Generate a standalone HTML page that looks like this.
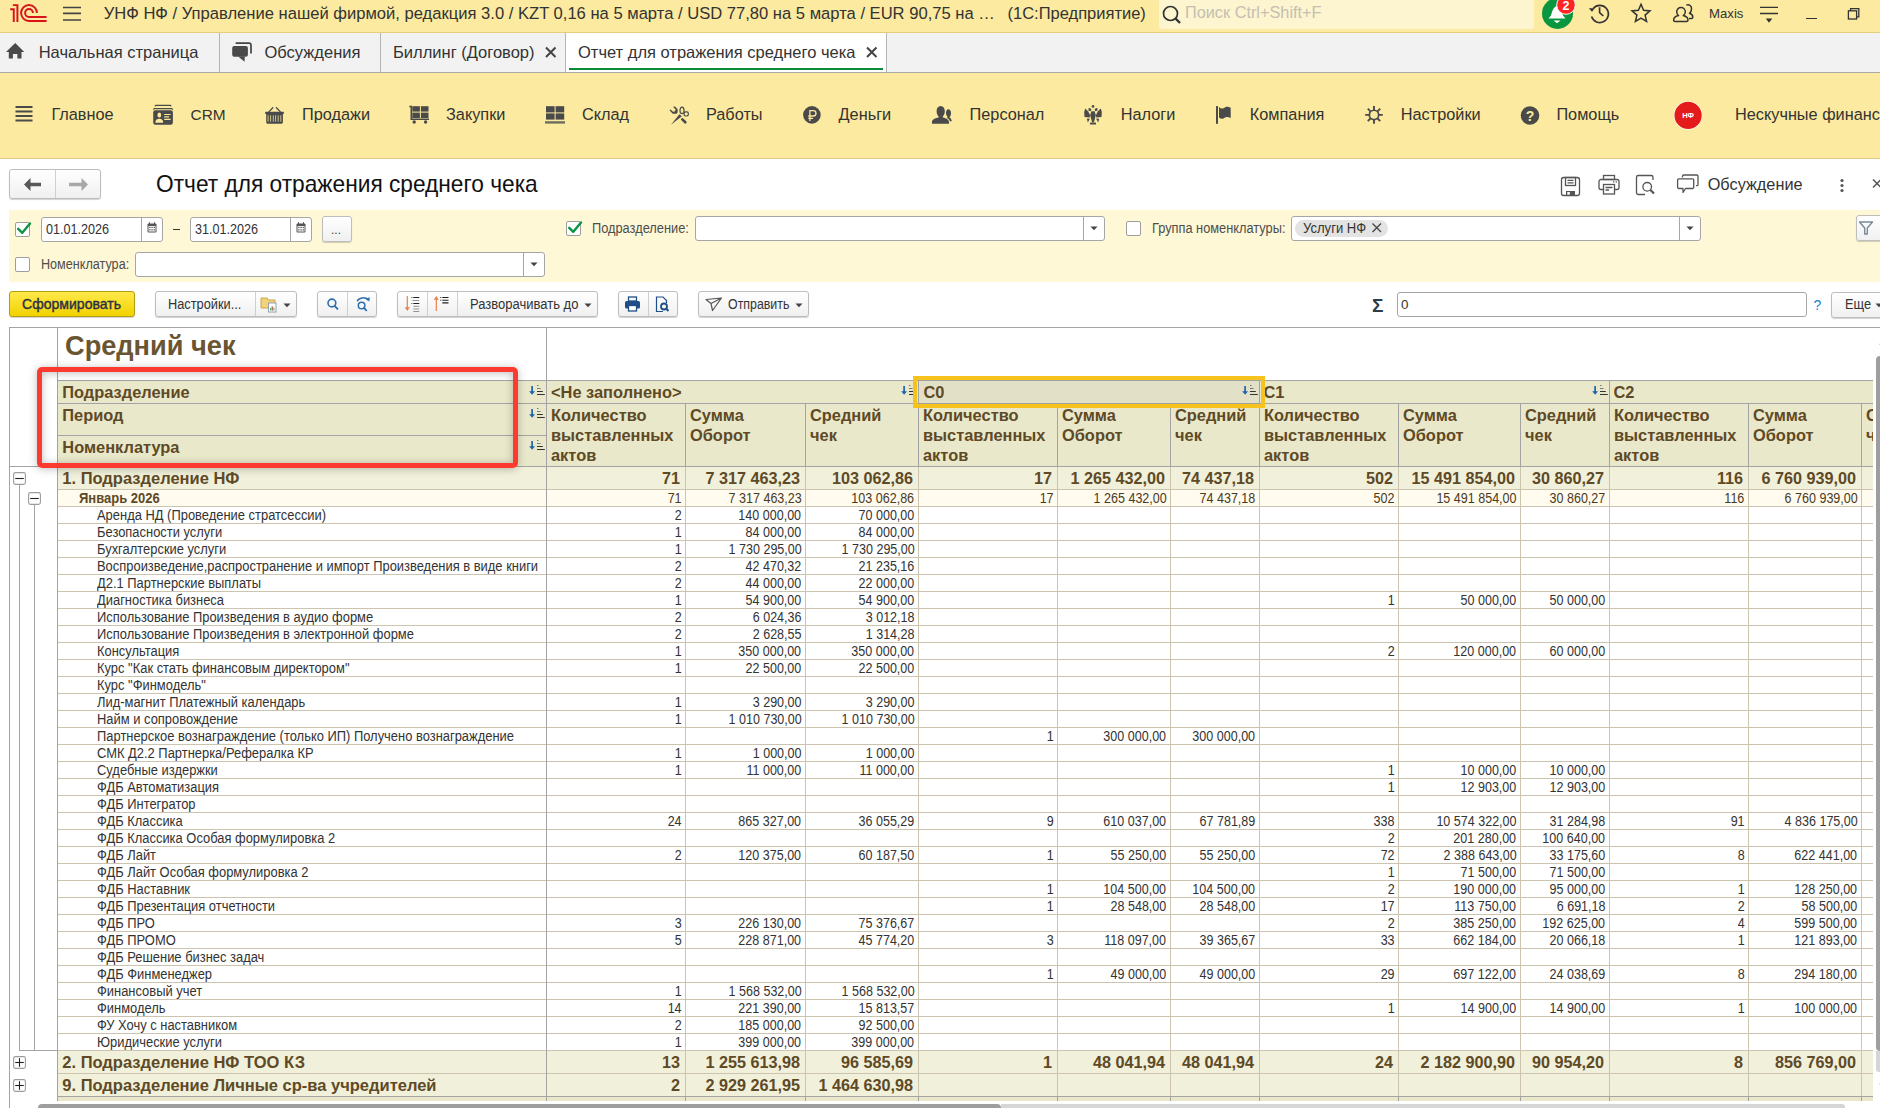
<!DOCTYPE html>
<html><head><meta charset="utf-8"><title>1C</title>
<style>
html,body{margin:0;padding:0;width:1880px;height:1108px;overflow:hidden;background:#fff;}
body{position:relative;font-family:"Liberation Sans",sans-serif;}
.a{position:absolute;box-sizing:border-box;}
.t{position:absolute;white-space:nowrap;font-family:"Liberation Sans",sans-serif;}
svg.a{overflow:visible;}
</style></head><body>
<div class="a" style="left:0px;top:0px;width:1880px;height:32px;background:#FBEA9F;"></div>
<div class="a" style="left:0px;top:32px;width:1880px;height:1px;background:#E3CF7A;"></div>
<svg class="a" style="left:0px;top:0px;" width="60" height="30" viewBox="0 0 60 30"><g fill="none" stroke="#D9121C" stroke-width="1.95"><path d="M10.2 9.2 H13.75 V21.9"/><path d="M12.9 5.1 H17.4 V21.9"/><path d="M36.9 13 A7.9 7.9 0 1 0 29 20.9 H46.6"/><path d="M32.9 13 A3.9 3.9 0 1 0 29 16.9 H46.6"/></g></svg>
<svg class="a" style="left:60px;top:0px;" width="30" height="30" viewBox="0 0 30 30"><g stroke="#444" stroke-width="1.6"><path d="M3 7.5H21M3 13.4H21M3 20H21"/></g></svg>
<div class="t " style="left:103.7px;top:6px;font-size:16.58px;line-height:16.58px;font-weight:400;color:#333;">УНФ НФ / Управление нашей фирмой, редакция 3.0 / KZT 0,16 на 5 марта / USD 77,80 на 5 марта / EUR 90,75 на …</div>
<div class="t " style="left:1007.5px;top:5px;font-size:16.5px;line-height:16.5px;font-weight:400;color:#333;">(1С:Предприятие)</div>
<div class="a" style="left:1159px;top:0px;width:375px;height:29px;background:#FDF5D0;border-radius:0 0 3px 3px;"></div>
<svg class="a" style="left:1160px;top:3px;" width="24" height="24" viewBox="0 0 24 24"><g fill="none" stroke="#333" stroke-width="1.7"><circle cx="10.5" cy="10.5" r="7"/><path d="M15.5 15.5 L20 20" stroke-width="2.4"/></g></svg>
<div class="t " style="left:1185px;top:4px;font-size:16.3px;line-height:16.3px;font-weight:400;color:#C4C0B0;">Поиск Ctrl+Shift+F</div>
<svg class="a" style="left:1536px;top:0px;" width="44" height="32" viewBox="0 0 44 32"><circle cx="21.5" cy="13.4" r="15.5" fill="#08963F"/><path d="M21 6 C17 7 16 12 15 15.5 L12.5 18.5 H29.5 L27 15.5 C26 12 25 7 21 6Z" fill="#fff"/><path d="M17.5 20.5 H24.5 L21 23.2Z" fill="#fff"/><circle cx="30" cy="5" r="9.3" fill="#FF2222" stroke="#fff" stroke-width="1"/><text x="30" y="10" font-family="Liberation Sans" font-size="12.5" font-weight="700" fill="#fff" text-anchor="middle">2</text></svg>
<svg class="a" style="left:1586px;top:-1.2px;" width="28" height="32" viewBox="0 0 28 32"><g fill="none" stroke="#333" stroke-width="1.6"><path d="M7.2 9.5 A8.6 8.6 0 1 1 5.6 17.5"/><path d="M13.6 8.2 V13.6 L17.3 17"/></g><path d="M2.8 9.3 L8.8 9.3 L6 12.8Z" fill="#333"/></svg>
<svg class="a" style="left:1628px;top:0px;" width="26" height="32" viewBox="0 0 26 32"><path d="M13 4.3 L15.6 10.3 L22 10.9 L17.1 15.1 L18.6 21.5 L13 18.2 L7.4 21.5 L8.9 15.1 L4 10.9 L10.4 10.3Z" fill="none" stroke="#333" stroke-width="1.5" stroke-linejoin="miter"/></svg>
<svg class="a" style="left:1670px;top:0px;" width="28" height="32" viewBox="0 0 28 32"><g fill="none" stroke="#333" stroke-width="1.5" stroke-linejoin="round"><path d="M16.3 5.2 A3.6 3.6 0 0 1 21.5 9 C21.5 11.3 20.5 12.5 19.5 13.3 C21.5 14 22.8 15.3 22.8 17.2 C22.8 18 22.3 18.5 21.5 18.5 H19"/><path d="M11 7.5 A4.3 4.3 0 0 1 15.3 11.8 C15.3 13.8 14.3 15 13.2 15.6 C16 16.3 18 17.6 18 20 C18 21 17.4 21.5 16.5 21.5 H5 C4.1 21.5 3.6 21 3.6 20 C3.6 17.6 5.6 16.3 8.6 15.6 C7.5 15 6.7 13.8 6.7 11.8 A4.3 4.3 0 0 1 11 7.5Z"/></g></svg>
<div class="t " style="left:1709px;top:7px;font-size:13.2px;line-height:13.2px;font-weight:400;color:#333;">Maxis</div>
<svg class="a" style="left:1756px;top:0px;" width="26" height="32" viewBox="0 0 26 32"><g stroke="#333" stroke-width="1.3"><path d="M4 7.3H22M4 13.5H22"/></g><path d="M9.8 18.6 H16.3 L13 22.8Z" fill="#333"/></svg>
<div class="a" style="left:1806px;top:17.5px;width:11px;height:1.3px;background:#333;"></div>
<svg class="a" style="left:1844px;top:4px;" width="20" height="20" viewBox="0 0 20 20"><g fill="none" stroke="#333" stroke-width="1.3"><rect x="4.4" y="6.8" width="8.2" height="8.2"/><path d="M6.6 6.8 V4.6 H14.8 V12.8 H12.6"/></g></svg>
<div class="a" style="left:0px;top:33px;width:1880px;height:39px;background:#F2F2F2;"></div>
<div class="a" style="left:0px;top:72px;width:1880px;height:1px;background:#A9A9A9;"></div>
<div class="a" style="left:219px;top:33px;width:1px;height:39px;background:#B5B5B5;"></div>
<div class="a" style="left:380px;top:33px;width:1px;height:39px;background:#B5B5B5;"></div>
<div class="a" style="left:565px;top:33px;width:321px;height:39px;background:#fff;"></div>
<div class="a" style="left:565px;top:33px;width:1px;height:39px;background:#B5B5B5;"></div>
<div class="a" style="left:886px;top:33px;width:1px;height:39px;background:#B5B5B5;"></div>
<div class="a" style="left:569px;top:68px;width:314px;height:2px;background:#0B8A3A;"></div>
<svg class="a" style="left:0px;top:36px;" width="30" height="30" viewBox="0 0 30 30"><path d="M15.2 7 L6 16 H8.8 V22.5 H12.9 V18 H17.4 V22.5 H21.5 V16 H24.3Z" fill="#4A4A4A"/></svg>
<div class="t " style="left:38.7px;top:44px;font-size:16.5px;line-height:16.5px;font-weight:400;color:#333;">Начальная страница</div>
<svg class="a" style="left:226px;top:36px;" width="32" height="30" viewBox="0 0 32 30"><path d="M10.3 7.1 H23.3 A1.8 1.8 0 0 1 25 8.9 V16.8" fill="none" stroke="#444" stroke-width="1.7" stroke-linecap="round"/><rect x="6.2" y="10" width="15.7" height="10.8" rx="2" fill="#4A4A4A"/><path d="M12.2 20.5 L18.6 25.7 L18.7 20.5Z" fill="#4A4A4A"/></svg>
<div class="t " style="left:264.5px;top:44px;font-size:16.5px;line-height:16.5px;font-weight:400;color:#333;">Обсуждения</div>
<div class="t " style="left:393px;top:44px;font-size:16.5px;line-height:16.5px;font-weight:400;color:#333;">Биллинг (Договор)</div>
<svg class="a" style="left:544px;top:45px;" width="14" height="14" viewBox="0 0 14 14"><path d="M2 2.5 L11.5 12 M11.5 2.5 L2 12" stroke="#444" stroke-width="2"/></svg>
<div class="t " style="left:578px;top:44px;font-size:16.5px;line-height:16.5px;font-weight:400;color:#333;">Отчет для отражения среднего чека</div>
<svg class="a" style="left:865px;top:45px;" width="14" height="14" viewBox="0 0 14 14"><path d="M2 2.5 L11.5 12 M11.5 2.5 L2 12" stroke="#444" stroke-width="2"/></svg>
<div class="a" style="left:0px;top:73px;width:1880px;height:85px;background:#FBEA9F;"></div>
<div class="a" style="left:0px;top:158px;width:1880px;height:1px;background:#DCCB86;"></div>
<svg class="a" style="left:15px;top:105px;" width="20" height="20" viewBox="0 0 20 20"><g stroke="#4A4A4A" stroke-width="2.2"><path d="M0.5 2H17.5M0.5 6.5H17.5M0.5 11H17.5M0.5 15.5H17.5"/></g></svg>
<div class="t " style="left:51.4px;top:106px;font-size:16.3px;line-height:16.3px;font-weight:400;color:#333;">Главное</div>
<svg class="a" style="left:145px;top:98px;" width="34" height="32" viewBox="0 0 34 32"><rect x="8.2" y="12.3" width="19.7" height="14.4" rx="2.2" fill="#4A4A4A"/><path d="M9.8 8.2 L10.8 7.4 H25.3 L26.3 8.2" fill="none" stroke="#4A4A4A" stroke-width="1.1"/><path d="M8.3 11.6 L9.3 10.6 H26.8 L27.8 11.6" fill="none" stroke="#4A4A4A" stroke-width="1.1"/><ellipse cx="14.3" cy="16.9" rx="1.9" ry="2.5" fill="#FBEA9F"/><path d="M10.3 24.8 C10.5 21.5 12.5 20.8 14.3 20.8 C16.1 20.8 18.1 21.5 18.2 24.8Z" fill="#FBEA9F"/><path d="M19.2 16.5H25.6M19.2 18.9H24M19.2 21.4H25.6" stroke="#FBEA9F" stroke-width="1.1"/></svg>
<div class="t " style="left:190.6px;top:107px;font-size:15.4px;line-height:15.4px;font-weight:400;color:#333;">CRM</div>
<svg class="a" style="left:258px;top:98px;" width="34" height="32" viewBox="0 0 34 32"><path d="M14.8 9.8 L11 13.6 M18.4 9.8 L22.2 13.6" stroke="#4A4A4A" stroke-width="1.3" stroke-linecap="round"/><rect x="7.1" y="13.8" width="18.8" height="2.2" rx="0.8" fill="#4A4A4A"/><path d="M8.2 15.9 H24.9 V24.3 A1.4 1.4 0 0 1 23.5 25.7 H9.6 A1.4 1.4 0 0 1 8.2 24.3Z" fill="#4A4A4A"/><path d="M10.1 17.3V23.7M12.6 17.3V23.7M15.3 17.3V23.7M17.6 17.3V23.7M20.2 17.3V23.7M22.8 17.3V23.7" stroke="#CFC48A" stroke-width="1"/></svg>
<div class="t " style="left:302px;top:106px;font-size:16.3px;line-height:16.3px;font-weight:400;color:#333;">Продажи</div>
<svg class="a" style="left:400px;top:100px;" width="32" height="28" viewBox="0 0 32 28"><path d="M9.3 6.5 H11.3 V19.2 H29" fill="none" stroke="#4A4A4A" stroke-width="1.6"/><g fill="#4A4A4A"><rect x="12.3" y="6.2" width="7.6" height="5.4"/><rect x="20.9" y="6.2" width="7.6" height="5.4"/><rect x="12.3" y="12.6" width="7.6" height="5.4"/><rect x="20.9" y="12.6" width="7.6" height="5.4"/><circle cx="14.2" cy="22" r="1.7"/><circle cx="25.6" cy="22" r="1.7"/></g></svg>
<div class="t " style="left:446px;top:106px;font-size:16.3px;line-height:16.3px;font-weight:400;color:#333;">Закупки</div>
<svg class="a" style="left:540px;top:100px;" width="30" height="28" viewBox="0 0 30 28"><g fill="#4A4A4A"><rect x="6" y="6.2" width="8.6" height="6.2"/><rect x="15.6" y="6.2" width="8.6" height="6.2"/><rect x="6" y="13.4" width="8.6" height="6.2"/><rect x="15.6" y="13.4" width="8.6" height="6.2"/></g><rect x="5" y="21.2" width="20" height="2.4" fill="#6E6E5E"/></svg>
<div class="t " style="left:582px;top:106px;font-size:16.3px;line-height:16.3px;font-weight:400;color:#333;">Склад</div>
<svg class="a" style="left:660px;top:100px;" width="32" height="30" viewBox="0 0 32 30"><path d="M9.5 10.3 L12.7 13.7 H16.5 L17.6 12.6 V9.3 L15 6.4 L13 6.8 L15.6 9.6 L14.8 11.5 L13 11.7 L10.6 9.5Z" fill="#4A4A4A"/><path d="M11 24.8 L19.4 14.3 L21.8 16.3Z" fill="#4A4A4A"/><path d="M22.3 19.4 L25.3 22.3" stroke="#4A4A4A" stroke-width="2.6" stroke-linecap="round"/><ellipse cx="22" cy="10.4" rx="2" ry="3.2" fill="none" stroke="#4A4A4A" stroke-width="1.2"/><rect x="24.1" y="11.8" width="4.2" height="4.2" rx="1.4" fill="none" stroke="#4A4A4A" stroke-width="1.2"/></svg>
<div class="t " style="left:706px;top:106px;font-size:16.3px;line-height:16.3px;font-weight:400;color:#333;">Работы</div>
<svg class="a" style="left:795px;top:100px;" width="32" height="30" viewBox="0 0 32 30"><circle cx="16.9" cy="14.9" r="8.8" fill="#4A4A4A"/><path d="M14.9 21.1 V10.6 H18.3 A2.7 2.7 0 0 1 18.3 16 H13.3 M13.3 18.4 H18" fill="none" stroke="#FBEA9F" stroke-width="1.3"/></svg>
<div class="t " style="left:838.6px;top:106px;font-size:16.3px;line-height:16.3px;font-weight:400;color:#333;">Деньги</div>
<svg class="a" style="left:925px;top:100px;" width="32" height="30" viewBox="0 0 32 30"><path d="M23.3 9.3 C25 9.3 26 11 26 13.2 C26 15 25.3 16.5 24.3 17.3 C25.5 17.8 26.5 19.3 26.8 21 L25 21.5 C24.5 19.8 23.4 18.6 22 18 L22.5 16.5 C21.5 15.8 21 14.5 21 13.2 C21 11 21.8 9.3 23.3 9.3Z" fill="#4A4A4A"/><path d="M15.7 6 C18.2 6 19.8 8.2 19.8 11.2 C19.8 13.6 18.9 15.3 17.8 16.6 V17.5 C21.5 18.2 24 19.6 24 22.2 V23.8 H7 V22.2 C7 19.6 9.6 18.2 13.6 17.5 V16.6 C12.5 15.3 11.6 13.6 11.6 11.2 C11.6 8.2 13.2 6 15.7 6Z" fill="#4A4A4A" stroke="#FBEA9F" stroke-width="0"/></svg>
<div class="t " style="left:969.6px;top:106px;font-size:16.3px;line-height:16.3px;font-weight:400;color:#333;">Персонал</div>
<svg class="a" style="left:1075px;top:100px;" width="32" height="30" viewBox="0 0 32 30"><g fill="#4A4A4A"><circle cx="18" cy="6.4" r="1.3"/><path d="M13.8 7.8 L16.4 8.9 L15.8 11.2 L13.4 10.6Z"/><path d="M22.2 7.8 L19.6 8.9 L20.2 11.2 L22.6 10.6Z"/><path d="M10.2 8.4 L13.3 11.6 L15.2 15.4 L14.6 17.6 L9.5 16.9 L9.2 12Z"/><path d="M25.8 8.4 L22.7 11.6 L20.8 15.4 L21.4 17.6 L26.5 16.9 L26.8 12Z"/><path d="M16.4 11.3 H19.6 L20.8 15 L19.7 19.6 L18.9 22.2 H17.1 L16.3 19.6 L15.2 15Z"/><path d="M11.8 18.8 L14.9 18.4 L12.9 22.6Z"/><path d="M24.2 18.8 L21.1 18.4 L23.1 22.6Z"/><path d="M15.2 22.4 H20.8 L21.1 24.4 H14.9Z"/></g></svg>
<div class="t " style="left:1120.8px;top:106px;font-size:16.3px;line-height:16.3px;font-weight:400;color:#333;">Налоги</div>
<svg class="a" style="left:1205px;top:100px;" width="32" height="30" viewBox="0 0 32 30"><rect x="11" y="6.1" width="2" height="17.7" fill="#4A4A4A"/><path d="M14 7 C15.5 8.5 17 9 18.5 8.2 C20.5 6.8 22 5.8 25.7 7.8 V18 C22 16.3 20.5 17.3 18.5 18.5 C17 19.2 15.5 18.8 14 17.4Z" fill="#4A4A4A"/></svg>
<div class="t " style="left:1249.8px;top:106px;font-size:16.3px;line-height:16.3px;font-weight:400;color:#333;">Компания</div>
<svg class="a" style="left:1355px;top:100px;" width="32" height="30" viewBox="0 0 32 30"><g transform="translate(19 14.9)"><circle r="4.65" fill="none" stroke="#4A4A4A" stroke-width="1.7"/><g stroke="#4A4A4A" stroke-width="1.9"><path d="M0 -8.8V-5M0 5V8.8M-8.8 0H-5M5 0H8.8M-6.2 -6.2L-3.6 -3.6M3.6 3.6L6.2 6.2M-6.2 6.2L-3.6 3.6M3.6 -3.6L6.2 -6.2"/></g></g></svg>
<div class="t " style="left:1400.8px;top:106px;font-size:16.3px;line-height:16.3px;font-weight:400;color:#333;">Настройки</div>
<svg class="a" style="left:1519px;top:104px;" width="22" height="22" viewBox="0 0 22 22"><circle cx="11" cy="11.5" r="9.3" fill="#4A4A4A"/><text x="11" y="16.8" font-family="Liberation Sans" font-size="14" font-weight="700" fill="#FBEA9F" text-anchor="middle">?</text></svg>
<div class="t " style="left:1556.4px;top:106px;font-size:16.3px;line-height:16.3px;font-weight:400;color:#333;">Помощь</div>
<svg class="a" style="left:1665px;top:98px;" width="50" height="35" viewBox="0 0 50 35"><circle cx="23.1" cy="17.4" r="14.2" fill="#fff"/><circle cx="23.1" cy="17.4" r="13.6" fill="#E31B1B"/><text x="23.1" y="20.2" font-family="Liberation Sans" font-size="7.5" font-weight="700" fill="#fff" text-anchor="middle">НФ</text></svg>
<div class="t " style="left:1735px;top:106px;font-size:16.3px;line-height:16.3px;font-weight:400;color:#333;">Нескучные финансы</div>
<div class="a" style="left:9px;top:169px;width:92px;height:30px;background:linear-gradient(#FFFFFF,#F0F0F0);border:1px solid #BDBDBD;border-radius:3px;box-shadow:0 1px 1px rgba(0,0,0,0.18);"></div>
<div class="a" style="left:55px;top:170px;width:1px;height:28px;background:#D0D0D0;"></div>
<svg class="a" style="left:20px;top:172px;" width="26" height="24" viewBox="0 0 26 24"><path d="M4 12.5 L10.5 6 V10.8 H21 V14.2 H10.5 V19Z" fill="#585858"/></svg>
<svg class="a" style="left:66px;top:172px;" width="26" height="24" viewBox="0 0 26 24"><path d="M22 12.5 L15.5 6 V10.8 H3 V14.2 H15.5 V19Z" fill="#A8A8A8"/></svg>
<div class="t " style="left:156.4px;top:172px;font-size:24px;line-height:24px;font-weight:400;color:#111;transform:scaleX(0.946);transform-origin:0 0;">Отчет для отражения среднего чека</div>
<svg class="a" style="left:1558px;top:172px;" width="26" height="26" viewBox="0 0 26 26"><g fill="none" stroke="#555" stroke-width="1.3"><rect x="3.5" y="5.5" width="18" height="18" rx="2.2"/><rect x="7.5" y="5.5" width="10" height="8"/><path d="M9.5 8.3H15.5M9.5 10.8H15.5"/></g><rect x="8" y="19" width="9" height="4.5" fill="#555"/><rect x="9.3" y="20" width="2.5" height="2.7" fill="#fff"/></svg>
<svg class="a" style="left:1596px;top:172px;" width="26" height="26" viewBox="0 0 26 26"><g fill="none" stroke="#555" stroke-width="1.3"><rect x="7.5" y="3.5" width="11" height="4"/><path d="M7 17.5 H5 A2 2 0 0 1 3 15.5 V9.5 A2 2 0 0 1 5 7.5 H21 A2 2 0 0 1 23 9.5 V15.5 A2 2 0 0 1 21 17.5 H19"/><rect x="7.5" y="12.5" width="11" height="9.5"/><path d="M9.5 15.5H16.5M9.5 18H13"/></g><path d="M17 9.8H18.3M19.6 9.8H21" stroke="#555" stroke-width="1.2"/></svg>
<svg class="a" style="left:1633px;top:172px;" width="26" height="26" viewBox="0 0 26 26"><g fill="none" stroke="#555" stroke-width="1.3"><path d="M12 22.5 H5.3 A1.8 1.8 0 0 1 3.5 20.7 V5.3 A1.8 1.8 0 0 1 5.3 3.5 H18.2 A1.8 1.8 0 0 1 20 5.3 V8"/><circle cx="14.2" cy="14.8" r="4.3"/></g><path d="M17.5 18 L21 21.5" stroke="#555" stroke-width="2.2"/></svg>
<svg class="a" style="left:1675px;top:172px;" width="28" height="26" viewBox="0 0 28 26"><g fill="none" stroke="#555" stroke-width="1.3" stroke-linejoin="round"><path d="M7.5 5.5 V4.2 A1.2 1.2 0 0 1 8.7 3 H21.8 A1.2 1.2 0 0 1 23 4.2 V12.5 A1.2 1.2 0 0 1 21.8 13.7 H21"/><path d="M3.8 6.8 H17.5 A1.2 1.2 0 0 1 18.7 8 V15.3 A1.2 1.2 0 0 1 17.5 16.5 H10.5 L8 20.5 V16.5 H3.8 A1.2 1.2 0 0 1 2.6 15.3 V8 A1.2 1.2 0 0 1 3.8 6.8Z"/></g></svg>
<div class="t " style="left:1707.7px;top:176px;font-size:16.3px;line-height:16.3px;font-weight:400;color:#333;">Обсуждение</div>
<svg class="a" style="left:1836px;top:172px;" width="12" height="26" viewBox="0 0 12 26"><circle cx="6" cy="8.5" r="1.6" fill="#555"/><circle cx="6" cy="13.5" r="1.6" fill="#555"/><circle cx="6" cy="18.5" r="1.6" fill="#555"/></svg>
<svg class="a" style="left:1868px;top:176px;" width="14" height="16" viewBox="0 0 14 16"><path d="M5 3.5 L13 11.5 M13 3.5 L5 11.5" stroke="#555" stroke-width="1.5"/></svg>
<div class="a" style="left:9px;top:210px;width:1871px;height:72px;background:#FFF8D7;"></div>
<div class="a" style="left:15px;top:222px;width:15px;height:15px;background:#fff;border:1px solid #9E9E9E;border-radius:2px;"></div>
<svg class="a" style="left:15px;top:220px;" width="18" height="18" viewBox="0 0 18 18"><path d="M3.2 8.8 L7.3 12.8 L15 3.5" fill="none" stroke="#0B9444" stroke-width="2.4" stroke-linecap="round" stroke-linejoin="round"/></svg>
<div class="a" style="left:41px;top:217px;width:122px;height:25px;background:#fff;border:1px solid #A6A6A6;border-radius:3px;"></div>
<div class="a" style="left:141px;top:218px;width:1px;height:23px;background:#A6A6A6;"></div>
<svg class="a" style="left:147px;top:222px;" width="10" height="11" viewBox="0 0 10 11"><rect x="0.5" y="1.5" width="9" height="9" rx="1" fill="#555"/><rect x="1.5" y="4" width="7" height="5.5" fill="#fff"/><path d="M2.5 0.2V2.3M7.5 0.2V2.3" stroke="#555" stroke-width="1"/><g fill="#555"><rect x="2.2" y="4.8" width="1.3" height="1.3"/><rect x="4.4" y="4.8" width="1.3" height="1.3"/><rect x="6.6" y="4.8" width="1.3" height="1.3"/><rect x="2.2" y="7.2" width="1.3" height="1.3"/><rect x="4.4" y="7.2" width="1.3" height="1.3"/><rect x="6.6" y="7.2" width="1.3" height="1.3"/></g></svg>
<div class="t " style="left:45.7px;top:222px;font-size:14px;line-height:14px;font-weight:400;color:#333;transform:scaleX(0.9);transform-origin:0 0;">01.01.2026</div>
<div class="a" style="left:173px;top:229px;width:7px;height:1.3px;background:#333;"></div>
<div class="a" style="left:190px;top:217px;width:122px;height:25px;background:#fff;border:1px solid #A6A6A6;border-radius:3px;"></div>
<div class="a" style="left:290px;top:218px;width:1px;height:23px;background:#A6A6A6;"></div>
<svg class="a" style="left:296px;top:222px;" width="10" height="11" viewBox="0 0 10 11"><rect x="0.5" y="1.5" width="9" height="9" rx="1" fill="#555"/><rect x="1.5" y="4" width="7" height="5.5" fill="#fff"/><path d="M2.5 0.2V2.3M7.5 0.2V2.3" stroke="#555" stroke-width="1"/><g fill="#555"><rect x="2.2" y="4.8" width="1.3" height="1.3"/><rect x="4.4" y="4.8" width="1.3" height="1.3"/><rect x="6.6" y="4.8" width="1.3" height="1.3"/><rect x="2.2" y="7.2" width="1.3" height="1.3"/><rect x="4.4" y="7.2" width="1.3" height="1.3"/><rect x="6.6" y="7.2" width="1.3" height="1.3"/></g></svg>
<div class="t " style="left:194.5px;top:222px;font-size:14px;line-height:14px;font-weight:400;color:#333;transform:scaleX(0.9);transform-origin:0 0;">31.01.2026</div>
<div class="a" style="left:322px;top:216px;width:30px;height:26px;background:linear-gradient(#FFFFFF,#F0F0F0);border:1px solid #BDBDBD;border-radius:3px;box-shadow:0 1px 1px rgba(0,0,0,0.18);"></div>
<div class="t " style="left:331px;top:224px;font-size:12px;line-height:12px;font-weight:400;color:#444;">...</div>
<div class="a" style="left:566px;top:221px;width:15px;height:15px;background:#fff;border:1px solid #9E9E9E;border-radius:2px;"></div>
<svg class="a" style="left:566px;top:219px;" width="18" height="18" viewBox="0 0 18 18"><path d="M3.2 8.8 L7.3 12.8 L15 3.5" fill="none" stroke="#0B9444" stroke-width="2.4" stroke-linecap="round" stroke-linejoin="round"/></svg>
<div class="t " style="left:592.4px;top:221px;font-size:14px;line-height:14px;font-weight:400;color:#4D4D4D;transform:scaleX(0.914);transform-origin:0 0;">Подразделение:</div>
<div class="a" style="left:695px;top:216px;width:410px;height:25px;background:#fff;border:1px solid #A6A6A6;border-radius:3px;"></div>
<div class="a" style="left:1083px;top:217px;width:1px;height:23px;background:#A6A6A6;"></div>
<svg class="a" style="left:1090px;top:226px;" width="8" height="5" viewBox="0 0 8 5"><path d="M0.5 0.5 H7.5 L4 4.2Z" fill="#444"/></svg>
<div class="a" style="left:1126px;top:221px;width:15px;height:15px;background:#fff;border:1px solid #9E9E9E;border-radius:2px;"></div>
<div class="t " style="left:1152px;top:221px;font-size:14px;line-height:14px;font-weight:400;color:#4D4D4D;transform:scaleX(0.914);transform-origin:0 0;">Группа номенклатуры:</div>
<div class="a" style="left:1291px;top:216px;width:410px;height:25px;background:#fff;border:1px solid #A6A6A6;border-radius:3px;"></div>
<div class="a" style="left:1679px;top:217px;width:1px;height:23px;background:#A6A6A6;"></div>
<svg class="a" style="left:1686px;top:226px;" width="8" height="5" viewBox="0 0 8 5"><path d="M0.5 0.5 H7.5 L4 4.2Z" fill="#444"/></svg>
<div class="a" style="left:1295px;top:220px;width:93px;height:17px;background:#E3E3E3;border-radius:8.5px;"></div>
<div class="t " style="left:1302.8px;top:221px;font-size:14px;line-height:14px;font-weight:400;color:#333;transform:scaleX(0.934);transform-origin:0 0;">Услуги НФ</div>
<svg class="a" style="left:1371px;top:222px;" width="12" height="12" viewBox="0 0 12 12"><path d="M1.5 1.5 L10 10 M10 1.5 L1.5 10" stroke="#444" stroke-width="1.3"/></svg>
<div class="a" style="left:1856px;top:215px;width:30px;height:26px;background:linear-gradient(#FFFFFF,#F0F0F0);border:1px solid #BDBDBD;border-radius:3px;box-shadow:0 1px 1px rgba(0,0,0,0.18);"></div>
<svg class="a" style="left:1857px;top:219px;" width="20" height="18" viewBox="0 0 20 18"><path d="M2.5 3 H15.5 L10.3 9 V15 H7.7 V9Z" fill="none" stroke="#7A8A99" stroke-width="1.4" stroke-linejoin="round"/></svg>
<div class="a" style="left:15px;top:257px;width:15px;height:15px;background:#fff;border:1px solid #9E9E9E;border-radius:2px;"></div>
<div class="t " style="left:41.2px;top:257px;font-size:14px;line-height:14px;font-weight:400;color:#4D4D4D;transform:scaleX(0.901);transform-origin:0 0;">Номенклатура:</div>
<div class="a" style="left:135px;top:252px;width:410px;height:25px;background:#fff;border:1px solid #A6A6A6;border-radius:3px;"></div>
<div class="a" style="left:523px;top:253px;width:1px;height:23px;background:#A6A6A6;"></div>
<svg class="a" style="left:530px;top:262px;" width="8" height="5" viewBox="0 0 8 5"><path d="M0.5 0.5 H7.5 L4 4.2Z" fill="#444"/></svg>
<div class="a" style="left:9px;top:291px;width:126px;height:26px;background:linear-gradient(#FFE94A,#F2D200);border:1px solid #B39E12;border-radius:3px;box-shadow:0 1px 1px rgba(0,0,0,0.18);"></div>
<div class="t " style="left:22.3px;top:297px;font-size:14.5px;line-height:14.5px;font-weight:400;color:#2A2F45;transform:scaleX(0.969);transform-origin:0 0;-webkit-text-stroke:0.4px #2A2F45;">Сформировать</div>
<div class="a" style="left:155px;top:291px;width:142px;height:26px;background:linear-gradient(#FFFFFF,#F0F0F0);border:1px solid #BDBDBD;border-radius:3px;box-shadow:0 1px 1px rgba(0,0,0,0.18);"></div>
<div class="a" style="left:255px;top:292px;width:1px;height:24px;background:#CFCFCF;"></div>
<div class="t " style="left:168px;top:297px;font-size:14px;line-height:14px;font-weight:400;color:#333;transform:scaleX(0.914);transform-origin:0 0;">Настройки...</div>
<svg class="a" style="left:259px;top:294px;" width="22" height="20" viewBox="0 0 22 20"><path d="M2 4 H8 L9.5 6 H16 V14 H2Z" fill="#F2D27A" stroke="#C8A040" stroke-width="0.9"/><rect x="9.5" y="9" width="7.5" height="9" fill="#fff" stroke="#8899AA" stroke-width="0.9"/><path d="M11.5 16.5V14M13.2 16.5V12.5M14.9 16.5V13.5" stroke="#3CA050" stroke-width="0.9"/><path d="M13.2 16.5V12.5" stroke="#D04040" stroke-width="0.9"/></svg>
<svg class="a" style="left:283px;top:303px;" width="8" height="5" viewBox="0 0 8 5"><path d="M0.5 0.5 H7.5 L4 4.2Z" fill="#444"/></svg>
<div class="a" style="left:317px;top:291px;width:60px;height:26px;background:linear-gradient(#FFFFFF,#F0F0F0);border:1px solid #BDBDBD;border-radius:3px;box-shadow:0 1px 1px rgba(0,0,0,0.18);"></div>
<div class="a" style="left:347px;top:292px;width:1px;height:24px;background:#CFCFCF;"></div>
<svg class="a" style="left:322px;top:294px;" width="22" height="20" viewBox="0 0 22 20"><circle cx="9.9" cy="9" r="3.9" fill="none" stroke="#2F6EAD" stroke-width="1.6"/><path d="M12.6 11.8 L15.5 14.8" stroke="#2F6EAD" stroke-width="1.9" stroke-linecap="round"/></svg>
<svg class="a" style="left:352px;top:294px;" width="22" height="20" viewBox="0 0 22 20"><path d="M5.2 7.2 C6.5 3.5 13.5 2.5 16 6" fill="none" stroke="#2F6EAD" stroke-width="1.5"/><path d="M13.6 4.8 L17.8 3.2 L17.3 7.6Z" fill="#2F6EAD"/><circle cx="9.6" cy="11.5" r="3.3" fill="none" stroke="#2F6EAD" stroke-width="1.5"/><path d="M11.9 13.8 L14.3 16.3" stroke="#2F6EAD" stroke-width="1.8" stroke-linecap="round"/></svg>
<div class="a" style="left:397px;top:291px;width:201px;height:26px;background:linear-gradient(#FFFFFF,#F0F0F0);border:1px solid #BDBDBD;border-radius:3px;box-shadow:0 1px 1px rgba(0,0,0,0.18);"></div>
<div class="a" style="left:427px;top:292px;width:1px;height:24px;background:#CFCFCF;"></div>
<div class="a" style="left:457px;top:292px;width:1px;height:24px;background:#CFCFCF;"></div>
<svg class="a" style="left:401px;top:294px;" width="24" height="20" viewBox="0 0 24 20"><path d="M6.3 2 V15" stroke="#E9804A" stroke-width="1.2"/><path d="M3.8 13.3 L6.3 17 L8.8 13.3Z" fill="#E9804A"/><g stroke="#222" stroke-width="1"><path d="M10.5 3.5H11.3M12.3 3.5H18.3M10.5 9.5H11.3M12.3 9.5H18.3"/></g><g stroke="#888" stroke-width="0.9"><path d="M11.5 6.5H18.3M12.3 12.3H18.3M12.3 15H18.3M12.3 17.5H18.3"/></g></svg>
<svg class="a" style="left:431px;top:294px;" width="24" height="20" viewBox="0 0 24 20"><path d="M5.3 4 V17" stroke="#E9804A" stroke-width="1.2"/><path d="M2.8 5.7 L5.3 2 L7.8 5.7Z" fill="#E9804A"/><g stroke="#222" stroke-width="1.1"><path d="M9.3 3.5H10.3M11.3 3.5H17.5M9.3 6.2H10.3M11.3 6.2H17.5M11.3 8.9H17.5"/></g></svg>
<div class="t " style="left:469.6px;top:297px;font-size:14px;line-height:14px;font-weight:400;color:#333;transform:scaleX(0.929);transform-origin:0 0;">Разворачивать до</div>
<svg class="a" style="left:584px;top:303px;" width="8" height="5" viewBox="0 0 8 5"><path d="M0.5 0.5 H7.5 L4 4.2Z" fill="#444"/></svg>
<div class="a" style="left:618px;top:291px;width:60px;height:26px;background:linear-gradient(#FFFFFF,#F0F0F0);border:1px solid #BDBDBD;border-radius:3px;box-shadow:0 1px 1px rgba(0,0,0,0.18);"></div>
<div class="a" style="left:648px;top:292px;width:1px;height:24px;background:#CFCFCF;"></div>
<svg class="a" style="left:622px;top:294px;" width="22" height="20" viewBox="0 0 22 20"><rect x="6.5" y="3" width="8" height="4" fill="none" stroke="#1F4F86" stroke-width="1.3"/><rect x="3" y="7" width="15" height="7.5" rx="1.5" fill="#1F4F86"/><rect x="6.5" y="11.5" width="8" height="5.5" fill="#fff" stroke="#1F4F86" stroke-width="1.3"/></svg>
<svg class="a" style="left:652px;top:294px;" width="22" height="20" viewBox="0 0 22 20"><path d="M11 17.5 H4.5 V3 H11 L14.5 6.5 V9" fill="none" stroke="#1F4F86" stroke-width="1.2"/><circle cx="12" cy="12.5" r="3" fill="none" stroke="#1F4F86" stroke-width="1.8"/><path d="M14 14.5 L16.5 17" stroke="#1F4F86" stroke-width="2"/></svg>
<div class="a" style="left:698px;top:291px;width:111px;height:26px;background:linear-gradient(#FFFFFF,#F0F0F0);border:1px solid #BDBDBD;border-radius:3px;box-shadow:0 1px 1px rgba(0,0,0,0.18);"></div>
<svg class="a" style="left:703px;top:294px;" width="22" height="20" viewBox="0 0 22 20"><path d="M3 5.5 L18.5 4 L9.5 16.5 L8 9.5Z M8 9.5 L18.5 4" fill="none" stroke="#555" stroke-width="1.2" stroke-linejoin="round"/></svg>
<div class="t " style="left:728.2px;top:297px;font-size:14px;line-height:14px;font-weight:400;color:#333;transform:scaleX(0.884);transform-origin:0 0;">Отправить</div>
<svg class="a" style="left:795px;top:303px;" width="8" height="5" viewBox="0 0 8 5"><path d="M0.5 0.5 H7.5 L4 4.2Z" fill="#444"/></svg>
<div class="t " style="left:1372px;top:296px;font-size:19px;line-height:19px;font-weight:700;color:#2E3B4A;">Σ</div>
<div class="a" style="left:1397px;top:292px;width:410px;height:25px;background:#fff;border:1px solid #A6A6A6;border-radius:3px;"></div>
<div class="t " style="left:1401px;top:298px;font-size:13.4px;line-height:13.4px;font-weight:400;color:#333;">0</div>
<div class="t " style="left:1813.5px;top:298px;font-size:14px;line-height:14px;font-weight:400;color:#1C7FD0;">?</div>
<div class="a" style="left:1831px;top:292px;width:60px;height:26px;background:linear-gradient(#FFFFFF,#F0F0F0);border:1px solid #BDBDBD;border-radius:3px;box-shadow:0 1px 1px rgba(0,0,0,0.18);"></div>
<div class="t " style="left:1845px;top:297px;font-size:14px;line-height:14px;font-weight:400;color:#333;transform:scaleX(0.914);transform-origin:0 0;">Еще</div>
<svg class="a" style="left:1875px;top:303px;" width="8" height="5" viewBox="0 0 8 5"><path d="M0.5 0.5 H7.5 L4 4.2Z" fill="#444"/></svg>
<div class="a" style="left:0;top:0;width:1880px;height:1108px;clip-path:inset(0px 7px 7px 0px);">
<div class="a" style="left:57px;top:381px;width:1823px;height:85px;background:#EAE8CA;"></div>
<div class="a" style="left:918px;top:381px;width:341px;height:22px;background:#E2E0C7;"></div>
<div class="a" style="left:57px;top:467px;width:1823px;height:22px;background:#F1F0DA;"></div>
<div class="a" style="left:57px;top:490px;width:1823px;height:16px;background:#FFFBEE;"></div>
<div class="a" style="left:57px;top:1051px;width:1823px;height:22px;background:#F1F0DA;"></div>
<div class="a" style="left:57px;top:1074px;width:1823px;height:22px;background:#F1F0DA;"></div>
<div class="a" style="left:57px;top:1097px;width:1823px;height:11px;background:#EAE8CA;"></div>
<div class="a" style="left:57px;top:380px;width:1823px;height:1px;background:#A3A3A3;"></div>
<div class="a" style="left:57px;top:403px;width:1823px;height:1px;background:#A3A3A3;"></div>
<div class="a" style="left:57px;top:435px;width:489px;height:1px;background:#A3A3A3;"></div>
<div class="a" style="left:9px;top:466px;width:1871px;height:1px;background:#A3A3A3;"></div>
<div class="a" style="left:57px;top:489px;width:1823px;height:1px;background:#CCC4AE;"></div>
<div class="a" style="left:57px;top:506px;width:1823px;height:1px;background:#CCC4AE;"></div>
<div class="a" style="left:57px;top:523px;width:1823px;height:1px;background:#CCC4AE;"></div>
<div class="a" style="left:57px;top:540px;width:1823px;height:1px;background:#CCC4AE;"></div>
<div class="a" style="left:57px;top:557px;width:1823px;height:1px;background:#CCC4AE;"></div>
<div class="a" style="left:57px;top:574px;width:1823px;height:1px;background:#CCC4AE;"></div>
<div class="a" style="left:57px;top:591px;width:1823px;height:1px;background:#CCC4AE;"></div>
<div class="a" style="left:57px;top:608px;width:1823px;height:1px;background:#CCC4AE;"></div>
<div class="a" style="left:57px;top:625px;width:1823px;height:1px;background:#CCC4AE;"></div>
<div class="a" style="left:57px;top:642px;width:1823px;height:1px;background:#CCC4AE;"></div>
<div class="a" style="left:57px;top:659px;width:1823px;height:1px;background:#CCC4AE;"></div>
<div class="a" style="left:57px;top:676px;width:1823px;height:1px;background:#CCC4AE;"></div>
<div class="a" style="left:57px;top:693px;width:1823px;height:1px;background:#CCC4AE;"></div>
<div class="a" style="left:57px;top:710px;width:1823px;height:1px;background:#CCC4AE;"></div>
<div class="a" style="left:57px;top:727px;width:1823px;height:1px;background:#CCC4AE;"></div>
<div class="a" style="left:57px;top:744px;width:1823px;height:1px;background:#CCC4AE;"></div>
<div class="a" style="left:57px;top:761px;width:1823px;height:1px;background:#CCC4AE;"></div>
<div class="a" style="left:57px;top:778px;width:1823px;height:1px;background:#CCC4AE;"></div>
<div class="a" style="left:57px;top:795px;width:1823px;height:1px;background:#CCC4AE;"></div>
<div class="a" style="left:57px;top:812px;width:1823px;height:1px;background:#CCC4AE;"></div>
<div class="a" style="left:57px;top:829px;width:1823px;height:1px;background:#CCC4AE;"></div>
<div class="a" style="left:57px;top:846px;width:1823px;height:1px;background:#CCC4AE;"></div>
<div class="a" style="left:57px;top:863px;width:1823px;height:1px;background:#CCC4AE;"></div>
<div class="a" style="left:57px;top:880px;width:1823px;height:1px;background:#CCC4AE;"></div>
<div class="a" style="left:57px;top:897px;width:1823px;height:1px;background:#CCC4AE;"></div>
<div class="a" style="left:57px;top:914px;width:1823px;height:1px;background:#CCC4AE;"></div>
<div class="a" style="left:57px;top:931px;width:1823px;height:1px;background:#CCC4AE;"></div>
<div class="a" style="left:57px;top:948px;width:1823px;height:1px;background:#CCC4AE;"></div>
<div class="a" style="left:57px;top:965px;width:1823px;height:1px;background:#CCC4AE;"></div>
<div class="a" style="left:57px;top:982px;width:1823px;height:1px;background:#CCC4AE;"></div>
<div class="a" style="left:57px;top:999px;width:1823px;height:1px;background:#CCC4AE;"></div>
<div class="a" style="left:57px;top:1016px;width:1823px;height:1px;background:#CCC4AE;"></div>
<div class="a" style="left:57px;top:1033px;width:1823px;height:1px;background:#CCC4AE;"></div>
<div class="a" style="left:57px;top:1050px;width:1823px;height:1px;background:#CCC4AE;"></div>
<div class="a" style="left:19px;top:1050px;width:38px;height:1px;background:#A3A3A3;"></div>
<div class="a" style="left:57px;top:1073px;width:1823px;height:1px;background:#CCC4AE;"></div>
<div class="a" style="left:57px;top:1096px;width:1823px;height:1px;background:#A3A3A3;"></div>
<div class="a" style="left:57px;top:328px;width:1px;height:773px;background:#A3A3A3;"></div>
<div class="a" style="left:546px;top:328px;width:1px;height:773px;background:#A3A3A3;"></div>
<div class="a" style="left:918px;top:380px;width:1px;height:87px;background:#A3A3A3;"></div>
<div class="a" style="left:1259px;top:380px;width:1px;height:87px;background:#A3A3A3;"></div>
<div class="a" style="left:1609px;top:380px;width:1px;height:87px;background:#A3A3A3;"></div>
<div class="a" style="left:685px;top:403px;width:1px;height:64px;background:#A3A3A3;"></div>
<div class="a" style="left:805px;top:403px;width:1px;height:64px;background:#A3A3A3;"></div>
<div class="a" style="left:1057px;top:403px;width:1px;height:64px;background:#A3A3A3;"></div>
<div class="a" style="left:1170px;top:403px;width:1px;height:64px;background:#A3A3A3;"></div>
<div class="a" style="left:1398px;top:403px;width:1px;height:64px;background:#A3A3A3;"></div>
<div class="a" style="left:1520px;top:403px;width:1px;height:64px;background:#A3A3A3;"></div>
<div class="a" style="left:1748px;top:403px;width:1px;height:64px;background:#A3A3A3;"></div>
<div class="a" style="left:1861px;top:403px;width:1px;height:64px;background:#A3A3A3;"></div>
<div class="a" style="left:685px;top:467px;width:1px;height:629px;background:#CCC4AE;"></div>
<div class="a" style="left:685px;top:1096px;width:1px;height:5px;background:#A3A3A3;"></div>
<div class="a" style="left:805px;top:467px;width:1px;height:629px;background:#CCC4AE;"></div>
<div class="a" style="left:805px;top:1096px;width:1px;height:5px;background:#A3A3A3;"></div>
<div class="a" style="left:918px;top:467px;width:1px;height:629px;background:#CCC4AE;"></div>
<div class="a" style="left:918px;top:1096px;width:1px;height:5px;background:#A3A3A3;"></div>
<div class="a" style="left:1057px;top:467px;width:1px;height:629px;background:#CCC4AE;"></div>
<div class="a" style="left:1057px;top:1096px;width:1px;height:5px;background:#A3A3A3;"></div>
<div class="a" style="left:1170px;top:467px;width:1px;height:629px;background:#CCC4AE;"></div>
<div class="a" style="left:1170px;top:1096px;width:1px;height:5px;background:#A3A3A3;"></div>
<div class="a" style="left:1259px;top:467px;width:1px;height:629px;background:#CCC4AE;"></div>
<div class="a" style="left:1259px;top:1096px;width:1px;height:5px;background:#A3A3A3;"></div>
<div class="a" style="left:1398px;top:467px;width:1px;height:629px;background:#CCC4AE;"></div>
<div class="a" style="left:1398px;top:1096px;width:1px;height:5px;background:#A3A3A3;"></div>
<div class="a" style="left:1520px;top:467px;width:1px;height:629px;background:#CCC4AE;"></div>
<div class="a" style="left:1520px;top:1096px;width:1px;height:5px;background:#A3A3A3;"></div>
<div class="a" style="left:1609px;top:467px;width:1px;height:629px;background:#CCC4AE;"></div>
<div class="a" style="left:1609px;top:1096px;width:1px;height:5px;background:#A3A3A3;"></div>
<div class="a" style="left:1748px;top:467px;width:1px;height:629px;background:#CCC4AE;"></div>
<div class="a" style="left:1748px;top:1096px;width:1px;height:5px;background:#A3A3A3;"></div>
<div class="a" style="left:1861px;top:467px;width:1px;height:629px;background:#CCC4AE;"></div>
<div class="a" style="left:1861px;top:1096px;width:1px;height:5px;background:#A3A3A3;"></div>
<div class="a" style="left:57px;top:1101px;width:1823px;height:7px;background:#fff;"></div>
<div class="a" style="left:19px;top:485px;width:1px;height:566px;background:#A3A3A3;"></div>
<div class="a" style="left:34px;top:505px;width:1px;height:546px;background:#A3A3A3;"></div>
<svg class="a" style="left:13px;top:472px;" width="13" height="13" viewBox="0 0 13 13"><rect x="0.6" y="0.6" width="11.8" height="11.8" rx="1.8" fill="#fff" stroke="#9C9C9C" stroke-width="1.1"/><path d="M2.2 6.5H10.8" stroke="#222" stroke-width="1.1"/></svg>
<svg class="a" style="left:28px;top:492px;" width="13" height="13" viewBox="0 0 13 13"><rect x="0.6" y="0.6" width="11.8" height="11.8" rx="1.8" fill="#fff" stroke="#9C9C9C" stroke-width="1.1"/><path d="M2.2 6.5H10.8" stroke="#222" stroke-width="1.1"/></svg>
<svg class="a" style="left:13px;top:1056px;" width="13" height="13" viewBox="0 0 13 13"><rect x="0.6" y="0.6" width="11.8" height="11.8" rx="1.8" fill="#fff" stroke="#9C9C9C" stroke-width="1.1"/><path d="M2.2 6.5H10.8" stroke="#222" stroke-width="1.1"/><path d="M6.5 2.2V10.8" stroke="#222" stroke-width="1.1"/></svg>
<svg class="a" style="left:13px;top:1079px;" width="13" height="13" viewBox="0 0 13 13"><rect x="0.6" y="0.6" width="11.8" height="11.8" rx="1.8" fill="#fff" stroke="#9C9C9C" stroke-width="1.1"/><path d="M2.2 6.5H10.8" stroke="#222" stroke-width="1.1"/><path d="M6.5 2.2V10.8" stroke="#222" stroke-width="1.1"/></svg>
<div class="t " style="left:65px;top:332px;font-size:27.2px;line-height:27.2px;font-weight:700;color:#6A5532;">Средний чек</div>
<svg class="a" style="left:528px;top:385px;" width="18" height="12" viewBox="0 0 18 12"><path d="M4.1 1 V7" stroke="#1C63B0" stroke-width="1.7"/><path d="M1.2 6.2 H7 L4.1 9.8Z" fill="#1C63B0"/><g stroke="#333" stroke-width="1"><path d="M9 0.5H10.5M9 3.5H12.5" stroke="#777"/><path d="M9 6.5H14.8M9 9.5H16.8"/></g></svg>
<svg class="a" style="left:528px;top:408px;" width="18" height="12" viewBox="0 0 18 12"><path d="M4.1 1 V7" stroke="#1C63B0" stroke-width="1.7"/><path d="M1.2 6.2 H7 L4.1 9.8Z" fill="#1C63B0"/><g stroke="#333" stroke-width="1"><path d="M9 0.5H10.5M9 3.5H12.5" stroke="#777"/><path d="M9 6.5H14.8M9 9.5H16.8"/></g></svg>
<svg class="a" style="left:528px;top:440px;" width="18" height="12" viewBox="0 0 18 12"><path d="M4.1 1 V7" stroke="#1C63B0" stroke-width="1.7"/><path d="M1.2 6.2 H7 L4.1 9.8Z" fill="#1C63B0"/><g stroke="#333" stroke-width="1"><path d="M9 0.5H10.5M9 3.5H12.5" stroke="#777"/><path d="M9 6.5H14.8M9 9.5H16.8"/></g></svg>
<svg class="a" style="left:900px;top:385px;" width="18" height="12" viewBox="0 0 18 12"><path d="M4.1 1 V7" stroke="#1C63B0" stroke-width="1.7"/><path d="M1.2 6.2 H7 L4.1 9.8Z" fill="#1C63B0"/><g stroke="#333" stroke-width="1"><path d="M9 0.5H10.5M9 3.5H12.5" stroke="#777"/><path d="M9 6.5H14.8M9 9.5H16.8"/></g></svg>
<svg class="a" style="left:1241px;top:385px;" width="18" height="12" viewBox="0 0 18 12"><path d="M4.1 1 V7" stroke="#1C63B0" stroke-width="1.7"/><path d="M1.2 6.2 H7 L4.1 9.8Z" fill="#1C63B0"/><g stroke="#333" stroke-width="1"><path d="M9 0.5H10.5M9 3.5H12.5" stroke="#777"/><path d="M9 6.5H14.8M9 9.5H16.8"/></g></svg>
<svg class="a" style="left:1591px;top:385px;" width="18" height="12" viewBox="0 0 18 12"><path d="M4.1 1 V7" stroke="#1C63B0" stroke-width="1.7"/><path d="M1.2 6.2 H7 L4.1 9.8Z" fill="#1C63B0"/><g stroke="#333" stroke-width="1"><path d="M9 0.5H10.5M9 3.5H12.5" stroke="#777"/><path d="M9 6.5H14.8M9 9.5H16.8"/></g></svg>
<div class="t " style="left:62.3px;top:384px;font-size:16.4px;line-height:16.4px;font-weight:700;color:#5E4A26;">Подразделение</div>
<div class="t " style="left:62.3px;top:407px;font-size:16.4px;line-height:16.4px;font-weight:700;color:#5E4A26;">Период</div>
<div class="t " style="left:62.3px;top:439px;font-size:16.4px;line-height:16.4px;font-weight:700;color:#5E4A26;">Номенклатура</div>
<div class="t " style="left:551px;top:384px;font-size:16.4px;line-height:16.4px;font-weight:700;color:#5E4A26;">&lt;Не заполнено&gt;</div>
<div class="t " style="left:923.4px;top:384px;font-size:16.4px;line-height:16.4px;font-weight:700;color:#5E4A26;">С0</div>
<div class="t " style="left:1263.5px;top:384px;font-size:16.4px;line-height:16.4px;font-weight:700;color:#5E4A26;">С1</div>
<div class="t " style="left:1613.5px;top:384px;font-size:16.4px;line-height:16.4px;font-weight:700;color:#5E4A26;">С2</div>
<div class="t " style="left:551px;top:407px;font-size:16.4px;line-height:16.4px;font-weight:700;color:#5E4A26;">Количество</div>
<div class="t " style="left:551px;top:427px;font-size:16.4px;line-height:16.4px;font-weight:700;color:#5E4A26;">выставленных</div>
<div class="t " style="left:551px;top:447px;font-size:16.4px;line-height:16.4px;font-weight:700;color:#5E4A26;">актов</div>
<div class="t " style="left:690px;top:407px;font-size:16.4px;line-height:16.4px;font-weight:700;color:#5E4A26;">Сумма</div>
<div class="t " style="left:690px;top:427px;font-size:16.4px;line-height:16.4px;font-weight:700;color:#5E4A26;">Оборот</div>
<div class="t " style="left:810px;top:407px;font-size:16.4px;line-height:16.4px;font-weight:700;color:#5E4A26;">Средний</div>
<div class="t " style="left:810px;top:427px;font-size:16.4px;line-height:16.4px;font-weight:700;color:#5E4A26;">чек</div>
<div class="t " style="left:923px;top:407px;font-size:16.4px;line-height:16.4px;font-weight:700;color:#5E4A26;">Количество</div>
<div class="t " style="left:923px;top:427px;font-size:16.4px;line-height:16.4px;font-weight:700;color:#5E4A26;">выставленных</div>
<div class="t " style="left:923px;top:447px;font-size:16.4px;line-height:16.4px;font-weight:700;color:#5E4A26;">актов</div>
<div class="t " style="left:1062px;top:407px;font-size:16.4px;line-height:16.4px;font-weight:700;color:#5E4A26;">Сумма</div>
<div class="t " style="left:1062px;top:427px;font-size:16.4px;line-height:16.4px;font-weight:700;color:#5E4A26;">Оборот</div>
<div class="t " style="left:1175px;top:407px;font-size:16.4px;line-height:16.4px;font-weight:700;color:#5E4A26;">Средний</div>
<div class="t " style="left:1175px;top:427px;font-size:16.4px;line-height:16.4px;font-weight:700;color:#5E4A26;">чек</div>
<div class="t " style="left:1264px;top:407px;font-size:16.4px;line-height:16.4px;font-weight:700;color:#5E4A26;">Количество</div>
<div class="t " style="left:1264px;top:427px;font-size:16.4px;line-height:16.4px;font-weight:700;color:#5E4A26;">выставленных</div>
<div class="t " style="left:1264px;top:447px;font-size:16.4px;line-height:16.4px;font-weight:700;color:#5E4A26;">актов</div>
<div class="t " style="left:1403px;top:407px;font-size:16.4px;line-height:16.4px;font-weight:700;color:#5E4A26;">Сумма</div>
<div class="t " style="left:1403px;top:427px;font-size:16.4px;line-height:16.4px;font-weight:700;color:#5E4A26;">Оборот</div>
<div class="t " style="left:1525px;top:407px;font-size:16.4px;line-height:16.4px;font-weight:700;color:#5E4A26;">Средний</div>
<div class="t " style="left:1525px;top:427px;font-size:16.4px;line-height:16.4px;font-weight:700;color:#5E4A26;">чек</div>
<div class="t " style="left:1614px;top:407px;font-size:16.4px;line-height:16.4px;font-weight:700;color:#5E4A26;">Количество</div>
<div class="t " style="left:1614px;top:427px;font-size:16.4px;line-height:16.4px;font-weight:700;color:#5E4A26;">выставленных</div>
<div class="t " style="left:1614px;top:447px;font-size:16.4px;line-height:16.4px;font-weight:700;color:#5E4A26;">актов</div>
<div class="t " style="left:1753px;top:407px;font-size:16.4px;line-height:16.4px;font-weight:700;color:#5E4A26;">Сумма</div>
<div class="t " style="left:1753px;top:427px;font-size:16.4px;line-height:16.4px;font-weight:700;color:#5E4A26;">Оборот</div>
<div class="t " style="left:1866px;top:407px;font-size:16.4px;line-height:16.4px;font-weight:700;color:#5E4A26;">Средний</div>
<div class="t " style="left:1866px;top:427px;font-size:16.4px;line-height:16.4px;font-weight:700;color:#5E4A26;">чек</div>
<div class="a" style="left:913px;top:376px;width:352px;height:32px;border:4px solid #F6C21C;"></div>
<div class="a" style="left:37px;top:367px;width:481px;height:101px;border:5px solid #FD3A2F;border-radius:5px;box-shadow:0 1px 8px rgba(0,0,0,0.26), inset 0 1px 8px rgba(0,0,0,0.26);"></div>
<div class="t " style="left:62.3px;top:470px;font-size:16.5px;line-height:16.5px;font-weight:700;color:#5E4A26;">1. Подразделение НФ</div>
<div class="t " style="right:1200px;top:470px;font-size:16.2px;line-height:16.2px;font-weight:700;color:#5E4A26;text-align:right;">71</div>
<div class="t " style="right:1080px;top:470px;font-size:16.2px;line-height:16.2px;font-weight:700;color:#5E4A26;text-align:right;">7 317 463,23</div>
<div class="t " style="right:967px;top:470px;font-size:16.2px;line-height:16.2px;font-weight:700;color:#5E4A26;text-align:right;">103 062,86</div>
<div class="t " style="right:828px;top:470px;font-size:16.2px;line-height:16.2px;font-weight:700;color:#5E4A26;text-align:right;">17</div>
<div class="t " style="right:715px;top:470px;font-size:16.2px;line-height:16.2px;font-weight:700;color:#5E4A26;text-align:right;">1 265 432,00</div>
<div class="t " style="right:626px;top:470px;font-size:16.2px;line-height:16.2px;font-weight:700;color:#5E4A26;text-align:right;">74 437,18</div>
<div class="t " style="right:487px;top:470px;font-size:16.2px;line-height:16.2px;font-weight:700;color:#5E4A26;text-align:right;">502</div>
<div class="t " style="right:365px;top:470px;font-size:16.2px;line-height:16.2px;font-weight:700;color:#5E4A26;text-align:right;">15 491 854,00</div>
<div class="t " style="right:276px;top:470px;font-size:16.2px;line-height:16.2px;font-weight:700;color:#5E4A26;text-align:right;">30 860,27</div>
<div class="t " style="right:137px;top:470px;font-size:16.2px;line-height:16.2px;font-weight:700;color:#5E4A26;text-align:right;">116</div>
<div class="t " style="right:24px;top:470px;font-size:16.2px;line-height:16.2px;font-weight:700;color:#5E4A26;text-align:right;">6 760 939,00</div>
<div class="t " style="left:79px;top:491px;font-size:14px;line-height:14px;font-weight:700;color:#5E4A26;transform:scaleX(0.93);transform-origin:0 0;">Январь 2026</div>
<div class="t " style="right:1198.5px;top:491px;font-size:14px;line-height:14px;font-weight:400;color:#4A3A1E;text-align:right;transform:scaleX(0.895);transform-origin:100% 0;">71</div>
<div class="t " style="right:1078.5px;top:491px;font-size:14px;line-height:14px;font-weight:400;color:#4A3A1E;text-align:right;transform:scaleX(0.895);transform-origin:100% 0;">7 317 463,23</div>
<div class="t " style="right:965.5px;top:491px;font-size:14px;line-height:14px;font-weight:400;color:#4A3A1E;text-align:right;transform:scaleX(0.895);transform-origin:100% 0;">103 062,86</div>
<div class="t " style="right:826.5px;top:491px;font-size:14px;line-height:14px;font-weight:400;color:#4A3A1E;text-align:right;transform:scaleX(0.895);transform-origin:100% 0;">17</div>
<div class="t " style="right:713.5px;top:491px;font-size:14px;line-height:14px;font-weight:400;color:#4A3A1E;text-align:right;transform:scaleX(0.895);transform-origin:100% 0;">1 265 432,00</div>
<div class="t " style="right:624.5px;top:491px;font-size:14px;line-height:14px;font-weight:400;color:#4A3A1E;text-align:right;transform:scaleX(0.895);transform-origin:100% 0;">74 437,18</div>
<div class="t " style="right:485.5px;top:491px;font-size:14px;line-height:14px;font-weight:400;color:#4A3A1E;text-align:right;transform:scaleX(0.895);transform-origin:100% 0;">502</div>
<div class="t " style="right:363.5px;top:491px;font-size:14px;line-height:14px;font-weight:400;color:#4A3A1E;text-align:right;transform:scaleX(0.895);transform-origin:100% 0;">15 491 854,00</div>
<div class="t " style="right:274.5px;top:491px;font-size:14px;line-height:14px;font-weight:400;color:#4A3A1E;text-align:right;transform:scaleX(0.895);transform-origin:100% 0;">30 860,27</div>
<div class="t " style="right:135.5px;top:491px;font-size:14px;line-height:14px;font-weight:400;color:#4A3A1E;text-align:right;transform:scaleX(0.895);transform-origin:100% 0;">116</div>
<div class="t " style="right:22.5px;top:491px;font-size:14px;line-height:14px;font-weight:400;color:#4A3A1E;text-align:right;transform:scaleX(0.895);transform-origin:100% 0;">6 760 939,00</div>
<div class="t " style="left:97.3px;top:508px;font-size:14px;line-height:14px;font-weight:400;color:#333;transform:scaleX(0.923);transform-origin:0 0;">Аренда НД (Проведение стратсессии)</div>
<div class="t " style="right:1198.5px;top:508px;font-size:14px;line-height:14px;font-weight:400;color:#333;text-align:right;transform:scaleX(0.895);transform-origin:100% 0;">2</div>
<div class="t " style="right:1078.5px;top:508px;font-size:14px;line-height:14px;font-weight:400;color:#333;text-align:right;transform:scaleX(0.895);transform-origin:100% 0;">140 000,00</div>
<div class="t " style="right:965.5px;top:508px;font-size:14px;line-height:14px;font-weight:400;color:#333;text-align:right;transform:scaleX(0.895);transform-origin:100% 0;">70 000,00</div>
<div class="t " style="left:97.3px;top:525px;font-size:14px;line-height:14px;font-weight:400;color:#333;transform:scaleX(0.923);transform-origin:0 0;">Безопасности услуги</div>
<div class="t " style="right:1198.5px;top:525px;font-size:14px;line-height:14px;font-weight:400;color:#333;text-align:right;transform:scaleX(0.895);transform-origin:100% 0;">1</div>
<div class="t " style="right:1078.5px;top:525px;font-size:14px;line-height:14px;font-weight:400;color:#333;text-align:right;transform:scaleX(0.895);transform-origin:100% 0;">84 000,00</div>
<div class="t " style="right:965.5px;top:525px;font-size:14px;line-height:14px;font-weight:400;color:#333;text-align:right;transform:scaleX(0.895);transform-origin:100% 0;">84 000,00</div>
<div class="t " style="left:97.3px;top:542px;font-size:14px;line-height:14px;font-weight:400;color:#333;transform:scaleX(0.923);transform-origin:0 0;">Бухгалтерские услуги</div>
<div class="t " style="right:1198.5px;top:542px;font-size:14px;line-height:14px;font-weight:400;color:#333;text-align:right;transform:scaleX(0.895);transform-origin:100% 0;">1</div>
<div class="t " style="right:1078.5px;top:542px;font-size:14px;line-height:14px;font-weight:400;color:#333;text-align:right;transform:scaleX(0.895);transform-origin:100% 0;">1 730 295,00</div>
<div class="t " style="right:965.5px;top:542px;font-size:14px;line-height:14px;font-weight:400;color:#333;text-align:right;transform:scaleX(0.895);transform-origin:100% 0;">1 730 295,00</div>
<div class="t " style="left:97.3px;top:559px;font-size:14px;line-height:14px;font-weight:400;color:#333;transform:scaleX(0.923);transform-origin:0 0;">Воспроизведение,распространение и импорт Произведения в виде книги</div>
<div class="t " style="right:1198.5px;top:559px;font-size:14px;line-height:14px;font-weight:400;color:#333;text-align:right;transform:scaleX(0.895);transform-origin:100% 0;">2</div>
<div class="t " style="right:1078.5px;top:559px;font-size:14px;line-height:14px;font-weight:400;color:#333;text-align:right;transform:scaleX(0.895);transform-origin:100% 0;">42 470,32</div>
<div class="t " style="right:965.5px;top:559px;font-size:14px;line-height:14px;font-weight:400;color:#333;text-align:right;transform:scaleX(0.895);transform-origin:100% 0;">21 235,16</div>
<div class="t " style="left:97.3px;top:576px;font-size:14px;line-height:14px;font-weight:400;color:#333;transform:scaleX(0.923);transform-origin:0 0;">Д2.1 Партнерские выплаты</div>
<div class="t " style="right:1198.5px;top:576px;font-size:14px;line-height:14px;font-weight:400;color:#333;text-align:right;transform:scaleX(0.895);transform-origin:100% 0;">2</div>
<div class="t " style="right:1078.5px;top:576px;font-size:14px;line-height:14px;font-weight:400;color:#333;text-align:right;transform:scaleX(0.895);transform-origin:100% 0;">44 000,00</div>
<div class="t " style="right:965.5px;top:576px;font-size:14px;line-height:14px;font-weight:400;color:#333;text-align:right;transform:scaleX(0.895);transform-origin:100% 0;">22 000,00</div>
<div class="t " style="left:97.3px;top:593px;font-size:14px;line-height:14px;font-weight:400;color:#333;transform:scaleX(0.923);transform-origin:0 0;">Диагностика бизнеса</div>
<div class="t " style="right:1198.5px;top:593px;font-size:14px;line-height:14px;font-weight:400;color:#333;text-align:right;transform:scaleX(0.895);transform-origin:100% 0;">1</div>
<div class="t " style="right:1078.5px;top:593px;font-size:14px;line-height:14px;font-weight:400;color:#333;text-align:right;transform:scaleX(0.895);transform-origin:100% 0;">54 900,00</div>
<div class="t " style="right:965.5px;top:593px;font-size:14px;line-height:14px;font-weight:400;color:#333;text-align:right;transform:scaleX(0.895);transform-origin:100% 0;">54 900,00</div>
<div class="t " style="right:485.5px;top:593px;font-size:14px;line-height:14px;font-weight:400;color:#333;text-align:right;transform:scaleX(0.895);transform-origin:100% 0;">1</div>
<div class="t " style="right:363.5px;top:593px;font-size:14px;line-height:14px;font-weight:400;color:#333;text-align:right;transform:scaleX(0.895);transform-origin:100% 0;">50 000,00</div>
<div class="t " style="right:274.5px;top:593px;font-size:14px;line-height:14px;font-weight:400;color:#333;text-align:right;transform:scaleX(0.895);transform-origin:100% 0;">50 000,00</div>
<div class="t " style="left:97.3px;top:610px;font-size:14px;line-height:14px;font-weight:400;color:#333;transform:scaleX(0.923);transform-origin:0 0;">Использование Произведения в аудио форме</div>
<div class="t " style="right:1198.5px;top:610px;font-size:14px;line-height:14px;font-weight:400;color:#333;text-align:right;transform:scaleX(0.895);transform-origin:100% 0;">2</div>
<div class="t " style="right:1078.5px;top:610px;font-size:14px;line-height:14px;font-weight:400;color:#333;text-align:right;transform:scaleX(0.895);transform-origin:100% 0;">6 024,36</div>
<div class="t " style="right:965.5px;top:610px;font-size:14px;line-height:14px;font-weight:400;color:#333;text-align:right;transform:scaleX(0.895);transform-origin:100% 0;">3 012,18</div>
<div class="t " style="left:97.3px;top:627px;font-size:14px;line-height:14px;font-weight:400;color:#333;transform:scaleX(0.923);transform-origin:0 0;">Использование Произведения в электронной форме</div>
<div class="t " style="right:1198.5px;top:627px;font-size:14px;line-height:14px;font-weight:400;color:#333;text-align:right;transform:scaleX(0.895);transform-origin:100% 0;">2</div>
<div class="t " style="right:1078.5px;top:627px;font-size:14px;line-height:14px;font-weight:400;color:#333;text-align:right;transform:scaleX(0.895);transform-origin:100% 0;">2 628,55</div>
<div class="t " style="right:965.5px;top:627px;font-size:14px;line-height:14px;font-weight:400;color:#333;text-align:right;transform:scaleX(0.895);transform-origin:100% 0;">1 314,28</div>
<div class="t " style="left:97.3px;top:644px;font-size:14px;line-height:14px;font-weight:400;color:#333;transform:scaleX(0.923);transform-origin:0 0;">Консультация</div>
<div class="t " style="right:1198.5px;top:644px;font-size:14px;line-height:14px;font-weight:400;color:#333;text-align:right;transform:scaleX(0.895);transform-origin:100% 0;">1</div>
<div class="t " style="right:1078.5px;top:644px;font-size:14px;line-height:14px;font-weight:400;color:#333;text-align:right;transform:scaleX(0.895);transform-origin:100% 0;">350 000,00</div>
<div class="t " style="right:965.5px;top:644px;font-size:14px;line-height:14px;font-weight:400;color:#333;text-align:right;transform:scaleX(0.895);transform-origin:100% 0;">350 000,00</div>
<div class="t " style="right:485.5px;top:644px;font-size:14px;line-height:14px;font-weight:400;color:#333;text-align:right;transform:scaleX(0.895);transform-origin:100% 0;">2</div>
<div class="t " style="right:363.5px;top:644px;font-size:14px;line-height:14px;font-weight:400;color:#333;text-align:right;transform:scaleX(0.895);transform-origin:100% 0;">120 000,00</div>
<div class="t " style="right:274.5px;top:644px;font-size:14px;line-height:14px;font-weight:400;color:#333;text-align:right;transform:scaleX(0.895);transform-origin:100% 0;">60 000,00</div>
<div class="t " style="left:97.3px;top:661px;font-size:14px;line-height:14px;font-weight:400;color:#333;transform:scaleX(0.923);transform-origin:0 0;">Курс &quot;Как стать финансовым директором&quot;</div>
<div class="t " style="right:1198.5px;top:661px;font-size:14px;line-height:14px;font-weight:400;color:#333;text-align:right;transform:scaleX(0.895);transform-origin:100% 0;">1</div>
<div class="t " style="right:1078.5px;top:661px;font-size:14px;line-height:14px;font-weight:400;color:#333;text-align:right;transform:scaleX(0.895);transform-origin:100% 0;">22 500,00</div>
<div class="t " style="right:965.5px;top:661px;font-size:14px;line-height:14px;font-weight:400;color:#333;text-align:right;transform:scaleX(0.895);transform-origin:100% 0;">22 500,00</div>
<div class="t " style="left:97.3px;top:678px;font-size:14px;line-height:14px;font-weight:400;color:#333;transform:scaleX(0.923);transform-origin:0 0;">Курс &quot;Финмодель&quot;</div>
<div class="t " style="left:97.3px;top:695px;font-size:14px;line-height:14px;font-weight:400;color:#333;transform:scaleX(0.923);transform-origin:0 0;">Лид-магнит Платежный календарь</div>
<div class="t " style="right:1198.5px;top:695px;font-size:14px;line-height:14px;font-weight:400;color:#333;text-align:right;transform:scaleX(0.895);transform-origin:100% 0;">1</div>
<div class="t " style="right:1078.5px;top:695px;font-size:14px;line-height:14px;font-weight:400;color:#333;text-align:right;transform:scaleX(0.895);transform-origin:100% 0;">3 290,00</div>
<div class="t " style="right:965.5px;top:695px;font-size:14px;line-height:14px;font-weight:400;color:#333;text-align:right;transform:scaleX(0.895);transform-origin:100% 0;">3 290,00</div>
<div class="t " style="left:97.3px;top:712px;font-size:14px;line-height:14px;font-weight:400;color:#333;transform:scaleX(0.923);transform-origin:0 0;">Найм и сопровождение</div>
<div class="t " style="right:1198.5px;top:712px;font-size:14px;line-height:14px;font-weight:400;color:#333;text-align:right;transform:scaleX(0.895);transform-origin:100% 0;">1</div>
<div class="t " style="right:1078.5px;top:712px;font-size:14px;line-height:14px;font-weight:400;color:#333;text-align:right;transform:scaleX(0.895);transform-origin:100% 0;">1 010 730,00</div>
<div class="t " style="right:965.5px;top:712px;font-size:14px;line-height:14px;font-weight:400;color:#333;text-align:right;transform:scaleX(0.895);transform-origin:100% 0;">1 010 730,00</div>
<div class="t " style="left:97.3px;top:729px;font-size:14px;line-height:14px;font-weight:400;color:#333;transform:scaleX(0.923);transform-origin:0 0;">Партнерское вознаграждение (только ИП) Получено вознаграждение</div>
<div class="t " style="right:826.5px;top:729px;font-size:14px;line-height:14px;font-weight:400;color:#333;text-align:right;transform:scaleX(0.895);transform-origin:100% 0;">1</div>
<div class="t " style="right:713.5px;top:729px;font-size:14px;line-height:14px;font-weight:400;color:#333;text-align:right;transform:scaleX(0.895);transform-origin:100% 0;">300 000,00</div>
<div class="t " style="right:624.5px;top:729px;font-size:14px;line-height:14px;font-weight:400;color:#333;text-align:right;transform:scaleX(0.895);transform-origin:100% 0;">300 000,00</div>
<div class="t " style="left:97.3px;top:746px;font-size:14px;line-height:14px;font-weight:400;color:#333;transform:scaleX(0.923);transform-origin:0 0;">СМК Д2.2 Партнерка/Рефералка КР</div>
<div class="t " style="right:1198.5px;top:746px;font-size:14px;line-height:14px;font-weight:400;color:#333;text-align:right;transform:scaleX(0.895);transform-origin:100% 0;">1</div>
<div class="t " style="right:1078.5px;top:746px;font-size:14px;line-height:14px;font-weight:400;color:#333;text-align:right;transform:scaleX(0.895);transform-origin:100% 0;">1 000,00</div>
<div class="t " style="right:965.5px;top:746px;font-size:14px;line-height:14px;font-weight:400;color:#333;text-align:right;transform:scaleX(0.895);transform-origin:100% 0;">1 000,00</div>
<div class="t " style="left:97.3px;top:763px;font-size:14px;line-height:14px;font-weight:400;color:#333;transform:scaleX(0.923);transform-origin:0 0;">Судебные издержки</div>
<div class="t " style="right:1198.5px;top:763px;font-size:14px;line-height:14px;font-weight:400;color:#333;text-align:right;transform:scaleX(0.895);transform-origin:100% 0;">1</div>
<div class="t " style="right:1078.5px;top:763px;font-size:14px;line-height:14px;font-weight:400;color:#333;text-align:right;transform:scaleX(0.895);transform-origin:100% 0;">11 000,00</div>
<div class="t " style="right:965.5px;top:763px;font-size:14px;line-height:14px;font-weight:400;color:#333;text-align:right;transform:scaleX(0.895);transform-origin:100% 0;">11 000,00</div>
<div class="t " style="right:485.5px;top:763px;font-size:14px;line-height:14px;font-weight:400;color:#333;text-align:right;transform:scaleX(0.895);transform-origin:100% 0;">1</div>
<div class="t " style="right:363.5px;top:763px;font-size:14px;line-height:14px;font-weight:400;color:#333;text-align:right;transform:scaleX(0.895);transform-origin:100% 0;">10 000,00</div>
<div class="t " style="right:274.5px;top:763px;font-size:14px;line-height:14px;font-weight:400;color:#333;text-align:right;transform:scaleX(0.895);transform-origin:100% 0;">10 000,00</div>
<div class="t " style="left:97.3px;top:780px;font-size:14px;line-height:14px;font-weight:400;color:#333;transform:scaleX(0.923);transform-origin:0 0;">ФДБ Автоматизация</div>
<div class="t " style="right:485.5px;top:780px;font-size:14px;line-height:14px;font-weight:400;color:#333;text-align:right;transform:scaleX(0.895);transform-origin:100% 0;">1</div>
<div class="t " style="right:363.5px;top:780px;font-size:14px;line-height:14px;font-weight:400;color:#333;text-align:right;transform:scaleX(0.895);transform-origin:100% 0;">12 903,00</div>
<div class="t " style="right:274.5px;top:780px;font-size:14px;line-height:14px;font-weight:400;color:#333;text-align:right;transform:scaleX(0.895);transform-origin:100% 0;">12 903,00</div>
<div class="t " style="left:97.3px;top:797px;font-size:14px;line-height:14px;font-weight:400;color:#333;transform:scaleX(0.923);transform-origin:0 0;">ФДБ Интегратор</div>
<div class="t " style="left:97.3px;top:814px;font-size:14px;line-height:14px;font-weight:400;color:#333;transform:scaleX(0.923);transform-origin:0 0;">ФДБ Классика</div>
<div class="t " style="right:1198.5px;top:814px;font-size:14px;line-height:14px;font-weight:400;color:#333;text-align:right;transform:scaleX(0.895);transform-origin:100% 0;">24</div>
<div class="t " style="right:1078.5px;top:814px;font-size:14px;line-height:14px;font-weight:400;color:#333;text-align:right;transform:scaleX(0.895);transform-origin:100% 0;">865 327,00</div>
<div class="t " style="right:965.5px;top:814px;font-size:14px;line-height:14px;font-weight:400;color:#333;text-align:right;transform:scaleX(0.895);transform-origin:100% 0;">36 055,29</div>
<div class="t " style="right:826.5px;top:814px;font-size:14px;line-height:14px;font-weight:400;color:#333;text-align:right;transform:scaleX(0.895);transform-origin:100% 0;">9</div>
<div class="t " style="right:713.5px;top:814px;font-size:14px;line-height:14px;font-weight:400;color:#333;text-align:right;transform:scaleX(0.895);transform-origin:100% 0;">610 037,00</div>
<div class="t " style="right:624.5px;top:814px;font-size:14px;line-height:14px;font-weight:400;color:#333;text-align:right;transform:scaleX(0.895);transform-origin:100% 0;">67 781,89</div>
<div class="t " style="right:485.5px;top:814px;font-size:14px;line-height:14px;font-weight:400;color:#333;text-align:right;transform:scaleX(0.895);transform-origin:100% 0;">338</div>
<div class="t " style="right:363.5px;top:814px;font-size:14px;line-height:14px;font-weight:400;color:#333;text-align:right;transform:scaleX(0.895);transform-origin:100% 0;">10 574 322,00</div>
<div class="t " style="right:274.5px;top:814px;font-size:14px;line-height:14px;font-weight:400;color:#333;text-align:right;transform:scaleX(0.895);transform-origin:100% 0;">31 284,98</div>
<div class="t " style="right:135.5px;top:814px;font-size:14px;line-height:14px;font-weight:400;color:#333;text-align:right;transform:scaleX(0.895);transform-origin:100% 0;">91</div>
<div class="t " style="right:22.5px;top:814px;font-size:14px;line-height:14px;font-weight:400;color:#333;text-align:right;transform:scaleX(0.895);transform-origin:100% 0;">4 836 175,00</div>
<div class="t " style="left:97.3px;top:831px;font-size:14px;line-height:14px;font-weight:400;color:#333;transform:scaleX(0.923);transform-origin:0 0;">ФДБ Классика Особая формулировка 2</div>
<div class="t " style="right:485.5px;top:831px;font-size:14px;line-height:14px;font-weight:400;color:#333;text-align:right;transform:scaleX(0.895);transform-origin:100% 0;">2</div>
<div class="t " style="right:363.5px;top:831px;font-size:14px;line-height:14px;font-weight:400;color:#333;text-align:right;transform:scaleX(0.895);transform-origin:100% 0;">201 280,00</div>
<div class="t " style="right:274.5px;top:831px;font-size:14px;line-height:14px;font-weight:400;color:#333;text-align:right;transform:scaleX(0.895);transform-origin:100% 0;">100 640,00</div>
<div class="t " style="left:97.3px;top:848px;font-size:14px;line-height:14px;font-weight:400;color:#333;transform:scaleX(0.923);transform-origin:0 0;">ФДБ Лайт</div>
<div class="t " style="right:1198.5px;top:848px;font-size:14px;line-height:14px;font-weight:400;color:#333;text-align:right;transform:scaleX(0.895);transform-origin:100% 0;">2</div>
<div class="t " style="right:1078.5px;top:848px;font-size:14px;line-height:14px;font-weight:400;color:#333;text-align:right;transform:scaleX(0.895);transform-origin:100% 0;">120 375,00</div>
<div class="t " style="right:965.5px;top:848px;font-size:14px;line-height:14px;font-weight:400;color:#333;text-align:right;transform:scaleX(0.895);transform-origin:100% 0;">60 187,50</div>
<div class="t " style="right:826.5px;top:848px;font-size:14px;line-height:14px;font-weight:400;color:#333;text-align:right;transform:scaleX(0.895);transform-origin:100% 0;">1</div>
<div class="t " style="right:713.5px;top:848px;font-size:14px;line-height:14px;font-weight:400;color:#333;text-align:right;transform:scaleX(0.895);transform-origin:100% 0;">55 250,00</div>
<div class="t " style="right:624.5px;top:848px;font-size:14px;line-height:14px;font-weight:400;color:#333;text-align:right;transform:scaleX(0.895);transform-origin:100% 0;">55 250,00</div>
<div class="t " style="right:485.5px;top:848px;font-size:14px;line-height:14px;font-weight:400;color:#333;text-align:right;transform:scaleX(0.895);transform-origin:100% 0;">72</div>
<div class="t " style="right:363.5px;top:848px;font-size:14px;line-height:14px;font-weight:400;color:#333;text-align:right;transform:scaleX(0.895);transform-origin:100% 0;">2 388 643,00</div>
<div class="t " style="right:274.5px;top:848px;font-size:14px;line-height:14px;font-weight:400;color:#333;text-align:right;transform:scaleX(0.895);transform-origin:100% 0;">33 175,60</div>
<div class="t " style="right:135.5px;top:848px;font-size:14px;line-height:14px;font-weight:400;color:#333;text-align:right;transform:scaleX(0.895);transform-origin:100% 0;">8</div>
<div class="t " style="right:22.5px;top:848px;font-size:14px;line-height:14px;font-weight:400;color:#333;text-align:right;transform:scaleX(0.895);transform-origin:100% 0;">622 441,00</div>
<div class="t " style="left:97.3px;top:865px;font-size:14px;line-height:14px;font-weight:400;color:#333;transform:scaleX(0.923);transform-origin:0 0;">ФДБ Лайт Особая формулировка 2</div>
<div class="t " style="right:485.5px;top:865px;font-size:14px;line-height:14px;font-weight:400;color:#333;text-align:right;transform:scaleX(0.895);transform-origin:100% 0;">1</div>
<div class="t " style="right:363.5px;top:865px;font-size:14px;line-height:14px;font-weight:400;color:#333;text-align:right;transform:scaleX(0.895);transform-origin:100% 0;">71 500,00</div>
<div class="t " style="right:274.5px;top:865px;font-size:14px;line-height:14px;font-weight:400;color:#333;text-align:right;transform:scaleX(0.895);transform-origin:100% 0;">71 500,00</div>
<div class="t " style="left:97.3px;top:882px;font-size:14px;line-height:14px;font-weight:400;color:#333;transform:scaleX(0.923);transform-origin:0 0;">ФДБ Наставник</div>
<div class="t " style="right:826.5px;top:882px;font-size:14px;line-height:14px;font-weight:400;color:#333;text-align:right;transform:scaleX(0.895);transform-origin:100% 0;">1</div>
<div class="t " style="right:713.5px;top:882px;font-size:14px;line-height:14px;font-weight:400;color:#333;text-align:right;transform:scaleX(0.895);transform-origin:100% 0;">104 500,00</div>
<div class="t " style="right:624.5px;top:882px;font-size:14px;line-height:14px;font-weight:400;color:#333;text-align:right;transform:scaleX(0.895);transform-origin:100% 0;">104 500,00</div>
<div class="t " style="right:485.5px;top:882px;font-size:14px;line-height:14px;font-weight:400;color:#333;text-align:right;transform:scaleX(0.895);transform-origin:100% 0;">2</div>
<div class="t " style="right:363.5px;top:882px;font-size:14px;line-height:14px;font-weight:400;color:#333;text-align:right;transform:scaleX(0.895);transform-origin:100% 0;">190 000,00</div>
<div class="t " style="right:274.5px;top:882px;font-size:14px;line-height:14px;font-weight:400;color:#333;text-align:right;transform:scaleX(0.895);transform-origin:100% 0;">95 000,00</div>
<div class="t " style="right:135.5px;top:882px;font-size:14px;line-height:14px;font-weight:400;color:#333;text-align:right;transform:scaleX(0.895);transform-origin:100% 0;">1</div>
<div class="t " style="right:22.5px;top:882px;font-size:14px;line-height:14px;font-weight:400;color:#333;text-align:right;transform:scaleX(0.895);transform-origin:100% 0;">128 250,00</div>
<div class="t " style="left:97.3px;top:899px;font-size:14px;line-height:14px;font-weight:400;color:#333;transform:scaleX(0.923);transform-origin:0 0;">ФДБ Презентация отчетности</div>
<div class="t " style="right:826.5px;top:899px;font-size:14px;line-height:14px;font-weight:400;color:#333;text-align:right;transform:scaleX(0.895);transform-origin:100% 0;">1</div>
<div class="t " style="right:713.5px;top:899px;font-size:14px;line-height:14px;font-weight:400;color:#333;text-align:right;transform:scaleX(0.895);transform-origin:100% 0;">28 548,00</div>
<div class="t " style="right:624.5px;top:899px;font-size:14px;line-height:14px;font-weight:400;color:#333;text-align:right;transform:scaleX(0.895);transform-origin:100% 0;">28 548,00</div>
<div class="t " style="right:485.5px;top:899px;font-size:14px;line-height:14px;font-weight:400;color:#333;text-align:right;transform:scaleX(0.895);transform-origin:100% 0;">17</div>
<div class="t " style="right:363.5px;top:899px;font-size:14px;line-height:14px;font-weight:400;color:#333;text-align:right;transform:scaleX(0.895);transform-origin:100% 0;">113 750,00</div>
<div class="t " style="right:274.5px;top:899px;font-size:14px;line-height:14px;font-weight:400;color:#333;text-align:right;transform:scaleX(0.895);transform-origin:100% 0;">6 691,18</div>
<div class="t " style="right:135.5px;top:899px;font-size:14px;line-height:14px;font-weight:400;color:#333;text-align:right;transform:scaleX(0.895);transform-origin:100% 0;">2</div>
<div class="t " style="right:22.5px;top:899px;font-size:14px;line-height:14px;font-weight:400;color:#333;text-align:right;transform:scaleX(0.895);transform-origin:100% 0;">58 500,00</div>
<div class="t " style="left:97.3px;top:916px;font-size:14px;line-height:14px;font-weight:400;color:#333;transform:scaleX(0.923);transform-origin:0 0;">ФДБ ПРО</div>
<div class="t " style="right:1198.5px;top:916px;font-size:14px;line-height:14px;font-weight:400;color:#333;text-align:right;transform:scaleX(0.895);transform-origin:100% 0;">3</div>
<div class="t " style="right:1078.5px;top:916px;font-size:14px;line-height:14px;font-weight:400;color:#333;text-align:right;transform:scaleX(0.895);transform-origin:100% 0;">226 130,00</div>
<div class="t " style="right:965.5px;top:916px;font-size:14px;line-height:14px;font-weight:400;color:#333;text-align:right;transform:scaleX(0.895);transform-origin:100% 0;">75 376,67</div>
<div class="t " style="right:485.5px;top:916px;font-size:14px;line-height:14px;font-weight:400;color:#333;text-align:right;transform:scaleX(0.895);transform-origin:100% 0;">2</div>
<div class="t " style="right:363.5px;top:916px;font-size:14px;line-height:14px;font-weight:400;color:#333;text-align:right;transform:scaleX(0.895);transform-origin:100% 0;">385 250,00</div>
<div class="t " style="right:274.5px;top:916px;font-size:14px;line-height:14px;font-weight:400;color:#333;text-align:right;transform:scaleX(0.895);transform-origin:100% 0;">192 625,00</div>
<div class="t " style="right:135.5px;top:916px;font-size:14px;line-height:14px;font-weight:400;color:#333;text-align:right;transform:scaleX(0.895);transform-origin:100% 0;">4</div>
<div class="t " style="right:22.5px;top:916px;font-size:14px;line-height:14px;font-weight:400;color:#333;text-align:right;transform:scaleX(0.895);transform-origin:100% 0;">599 500,00</div>
<div class="t " style="left:97.3px;top:933px;font-size:14px;line-height:14px;font-weight:400;color:#333;transform:scaleX(0.923);transform-origin:0 0;">ФДБ ПРОМО</div>
<div class="t " style="right:1198.5px;top:933px;font-size:14px;line-height:14px;font-weight:400;color:#333;text-align:right;transform:scaleX(0.895);transform-origin:100% 0;">5</div>
<div class="t " style="right:1078.5px;top:933px;font-size:14px;line-height:14px;font-weight:400;color:#333;text-align:right;transform:scaleX(0.895);transform-origin:100% 0;">228 871,00</div>
<div class="t " style="right:965.5px;top:933px;font-size:14px;line-height:14px;font-weight:400;color:#333;text-align:right;transform:scaleX(0.895);transform-origin:100% 0;">45 774,20</div>
<div class="t " style="right:826.5px;top:933px;font-size:14px;line-height:14px;font-weight:400;color:#333;text-align:right;transform:scaleX(0.895);transform-origin:100% 0;">3</div>
<div class="t " style="right:713.5px;top:933px;font-size:14px;line-height:14px;font-weight:400;color:#333;text-align:right;transform:scaleX(0.895);transform-origin:100% 0;">118 097,00</div>
<div class="t " style="right:624.5px;top:933px;font-size:14px;line-height:14px;font-weight:400;color:#333;text-align:right;transform:scaleX(0.895);transform-origin:100% 0;">39 365,67</div>
<div class="t " style="right:485.5px;top:933px;font-size:14px;line-height:14px;font-weight:400;color:#333;text-align:right;transform:scaleX(0.895);transform-origin:100% 0;">33</div>
<div class="t " style="right:363.5px;top:933px;font-size:14px;line-height:14px;font-weight:400;color:#333;text-align:right;transform:scaleX(0.895);transform-origin:100% 0;">662 184,00</div>
<div class="t " style="right:274.5px;top:933px;font-size:14px;line-height:14px;font-weight:400;color:#333;text-align:right;transform:scaleX(0.895);transform-origin:100% 0;">20 066,18</div>
<div class="t " style="right:135.5px;top:933px;font-size:14px;line-height:14px;font-weight:400;color:#333;text-align:right;transform:scaleX(0.895);transform-origin:100% 0;">1</div>
<div class="t " style="right:22.5px;top:933px;font-size:14px;line-height:14px;font-weight:400;color:#333;text-align:right;transform:scaleX(0.895);transform-origin:100% 0;">121 893,00</div>
<div class="t " style="left:97.3px;top:950px;font-size:14px;line-height:14px;font-weight:400;color:#333;transform:scaleX(0.923);transform-origin:0 0;">ФДБ Решение бизнес задач</div>
<div class="t " style="left:97.3px;top:967px;font-size:14px;line-height:14px;font-weight:400;color:#333;transform:scaleX(0.923);transform-origin:0 0;">ФДБ Финменеджер</div>
<div class="t " style="right:826.5px;top:967px;font-size:14px;line-height:14px;font-weight:400;color:#333;text-align:right;transform:scaleX(0.895);transform-origin:100% 0;">1</div>
<div class="t " style="right:713.5px;top:967px;font-size:14px;line-height:14px;font-weight:400;color:#333;text-align:right;transform:scaleX(0.895);transform-origin:100% 0;">49 000,00</div>
<div class="t " style="right:624.5px;top:967px;font-size:14px;line-height:14px;font-weight:400;color:#333;text-align:right;transform:scaleX(0.895);transform-origin:100% 0;">49 000,00</div>
<div class="t " style="right:485.5px;top:967px;font-size:14px;line-height:14px;font-weight:400;color:#333;text-align:right;transform:scaleX(0.895);transform-origin:100% 0;">29</div>
<div class="t " style="right:363.5px;top:967px;font-size:14px;line-height:14px;font-weight:400;color:#333;text-align:right;transform:scaleX(0.895);transform-origin:100% 0;">697 122,00</div>
<div class="t " style="right:274.5px;top:967px;font-size:14px;line-height:14px;font-weight:400;color:#333;text-align:right;transform:scaleX(0.895);transform-origin:100% 0;">24 038,69</div>
<div class="t " style="right:135.5px;top:967px;font-size:14px;line-height:14px;font-weight:400;color:#333;text-align:right;transform:scaleX(0.895);transform-origin:100% 0;">8</div>
<div class="t " style="right:22.5px;top:967px;font-size:14px;line-height:14px;font-weight:400;color:#333;text-align:right;transform:scaleX(0.895);transform-origin:100% 0;">294 180,00</div>
<div class="t " style="left:97.3px;top:984px;font-size:14px;line-height:14px;font-weight:400;color:#333;transform:scaleX(0.923);transform-origin:0 0;">Финансовый учет</div>
<div class="t " style="right:1198.5px;top:984px;font-size:14px;line-height:14px;font-weight:400;color:#333;text-align:right;transform:scaleX(0.895);transform-origin:100% 0;">1</div>
<div class="t " style="right:1078.5px;top:984px;font-size:14px;line-height:14px;font-weight:400;color:#333;text-align:right;transform:scaleX(0.895);transform-origin:100% 0;">1 568 532,00</div>
<div class="t " style="right:965.5px;top:984px;font-size:14px;line-height:14px;font-weight:400;color:#333;text-align:right;transform:scaleX(0.895);transform-origin:100% 0;">1 568 532,00</div>
<div class="t " style="left:97.3px;top:1001px;font-size:14px;line-height:14px;font-weight:400;color:#333;transform:scaleX(0.923);transform-origin:0 0;">Финмодель</div>
<div class="t " style="right:1198.5px;top:1001px;font-size:14px;line-height:14px;font-weight:400;color:#333;text-align:right;transform:scaleX(0.895);transform-origin:100% 0;">14</div>
<div class="t " style="right:1078.5px;top:1001px;font-size:14px;line-height:14px;font-weight:400;color:#333;text-align:right;transform:scaleX(0.895);transform-origin:100% 0;">221 390,00</div>
<div class="t " style="right:965.5px;top:1001px;font-size:14px;line-height:14px;font-weight:400;color:#333;text-align:right;transform:scaleX(0.895);transform-origin:100% 0;">15 813,57</div>
<div class="t " style="right:485.5px;top:1001px;font-size:14px;line-height:14px;font-weight:400;color:#333;text-align:right;transform:scaleX(0.895);transform-origin:100% 0;">1</div>
<div class="t " style="right:363.5px;top:1001px;font-size:14px;line-height:14px;font-weight:400;color:#333;text-align:right;transform:scaleX(0.895);transform-origin:100% 0;">14 900,00</div>
<div class="t " style="right:274.5px;top:1001px;font-size:14px;line-height:14px;font-weight:400;color:#333;text-align:right;transform:scaleX(0.895);transform-origin:100% 0;">14 900,00</div>
<div class="t " style="right:135.5px;top:1001px;font-size:14px;line-height:14px;font-weight:400;color:#333;text-align:right;transform:scaleX(0.895);transform-origin:100% 0;">1</div>
<div class="t " style="right:22.5px;top:1001px;font-size:14px;line-height:14px;font-weight:400;color:#333;text-align:right;transform:scaleX(0.895);transform-origin:100% 0;">100 000,00</div>
<div class="t " style="left:97.3px;top:1018px;font-size:14px;line-height:14px;font-weight:400;color:#333;transform:scaleX(0.923);transform-origin:0 0;">ФУ Хочу с наставником</div>
<div class="t " style="right:1198.5px;top:1018px;font-size:14px;line-height:14px;font-weight:400;color:#333;text-align:right;transform:scaleX(0.895);transform-origin:100% 0;">2</div>
<div class="t " style="right:1078.5px;top:1018px;font-size:14px;line-height:14px;font-weight:400;color:#333;text-align:right;transform:scaleX(0.895);transform-origin:100% 0;">185 000,00</div>
<div class="t " style="right:965.5px;top:1018px;font-size:14px;line-height:14px;font-weight:400;color:#333;text-align:right;transform:scaleX(0.895);transform-origin:100% 0;">92 500,00</div>
<div class="t " style="left:97.3px;top:1035px;font-size:14px;line-height:14px;font-weight:400;color:#333;transform:scaleX(0.923);transform-origin:0 0;">Юридические услуги</div>
<div class="t " style="right:1198.5px;top:1035px;font-size:14px;line-height:14px;font-weight:400;color:#333;text-align:right;transform:scaleX(0.895);transform-origin:100% 0;">1</div>
<div class="t " style="right:1078.5px;top:1035px;font-size:14px;line-height:14px;font-weight:400;color:#333;text-align:right;transform:scaleX(0.895);transform-origin:100% 0;">399 000,00</div>
<div class="t " style="right:965.5px;top:1035px;font-size:14px;line-height:14px;font-weight:400;color:#333;text-align:right;transform:scaleX(0.895);transform-origin:100% 0;">399 000,00</div>
<div class="t " style="left:62.3px;top:1054px;font-size:16.5px;line-height:16.5px;font-weight:700;color:#5E4A26;">2. Подразделение НФ ТОО КЗ</div>
<div class="t " style="right:1200px;top:1054px;font-size:16.2px;line-height:16.2px;font-weight:700;color:#5E4A26;text-align:right;">13</div>
<div class="t " style="right:1080px;top:1054px;font-size:16.2px;line-height:16.2px;font-weight:700;color:#5E4A26;text-align:right;">1 255 613,98</div>
<div class="t " style="right:967px;top:1054px;font-size:16.2px;line-height:16.2px;font-weight:700;color:#5E4A26;text-align:right;">96 585,69</div>
<div class="t " style="right:828px;top:1054px;font-size:16.2px;line-height:16.2px;font-weight:700;color:#5E4A26;text-align:right;">1</div>
<div class="t " style="right:715px;top:1054px;font-size:16.2px;line-height:16.2px;font-weight:700;color:#5E4A26;text-align:right;">48 041,94</div>
<div class="t " style="right:626px;top:1054px;font-size:16.2px;line-height:16.2px;font-weight:700;color:#5E4A26;text-align:right;">48 041,94</div>
<div class="t " style="right:487px;top:1054px;font-size:16.2px;line-height:16.2px;font-weight:700;color:#5E4A26;text-align:right;">24</div>
<div class="t " style="right:365px;top:1054px;font-size:16.2px;line-height:16.2px;font-weight:700;color:#5E4A26;text-align:right;">2 182 900,90</div>
<div class="t " style="right:276px;top:1054px;font-size:16.2px;line-height:16.2px;font-weight:700;color:#5E4A26;text-align:right;">90 954,20</div>
<div class="t " style="right:137px;top:1054px;font-size:16.2px;line-height:16.2px;font-weight:700;color:#5E4A26;text-align:right;">8</div>
<div class="t " style="right:24px;top:1054px;font-size:16.2px;line-height:16.2px;font-weight:700;color:#5E4A26;text-align:right;">856 769,00</div>
<div class="t " style="left:62.3px;top:1077px;font-size:16.5px;line-height:16.5px;font-weight:700;color:#5E4A26;">9. Подразделение Личные ср-ва учредителей</div>
<div class="t " style="right:1200px;top:1077px;font-size:16.2px;line-height:16.2px;font-weight:700;color:#5E4A26;text-align:right;">2</div>
<div class="t " style="right:1080px;top:1077px;font-size:16.2px;line-height:16.2px;font-weight:700;color:#5E4A26;text-align:right;">2 929 261,95</div>
<div class="t " style="right:967px;top:1077px;font-size:16.2px;line-height:16.2px;font-weight:700;color:#5E4A26;text-align:right;">1 464 630,98</div>
</div>
<div class="a" style="left:9px;top:327px;width:1px;height:781px;background:#A3A3A3;"></div>
<div class="a" style="left:9px;top:327px;width:1871px;height:1px;background:#A3A3A3;"></div>
<svg class="a" style="left:1878px;top:340px;" width="4" height="6" viewBox="0 0 4 6"><path d="M1 4.5 L3.5 2 L6 4.5Z" fill="#999"/></svg>
<svg class="a" style="left:1878px;top:1082px;" width="4" height="6" viewBox="0 0 4 6"><path d="M1 1.5 L3.5 4 L6 1.5Z" fill="#999"/></svg>
<div class="a" style="left:1876px;top:356px;width:4px;height:695px;background:#9E9E9E;border-radius:4px 0 0 4px;"></div>
<div class="a" style="left:1876px;top:1051px;width:4px;height:21px;background:#D6D6D6;border-radius:0 0 0 3px;"></div>
<div class="a" style="left:38px;top:1104px;width:963px;height:4px;background:#9E9E9E;border-radius:4px 4px 0 0;"></div>
<div class="a" style="left:1001px;top:1104px;width:844px;height:4px;background:#D6D6D6;border-radius:0 3px 0 0;"></div>
</body></html>
